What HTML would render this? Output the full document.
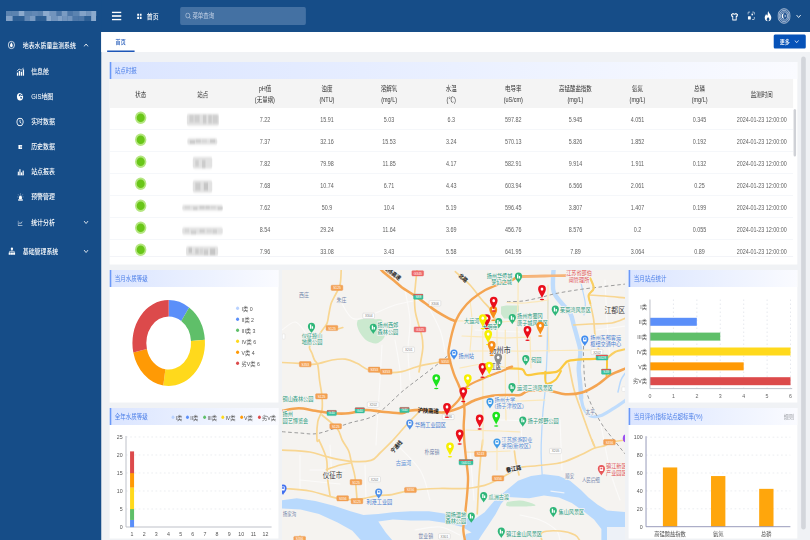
<!DOCTYPE html><html lang="zh-CN"><head><meta charset="utf-8"><title>地表水质量监测系统</title><style>
*{box-sizing:border-box;margin:0;padding:0}
html,body{width:810px;height:540px;overflow:hidden;background:#f0f2f5;}
body{font-family:"Liberation Sans","Noto Sans CJK SC",sans-serif;}
#app{position:absolute;left:0;top:0;width:1920px;height:1080px;transform-origin:0 0;transform:scale(0.421875,0.5);background:#f0f2f5;overflow:hidden;font-size:14px;color:#333}
.abs{position:absolute}
#side{position:absolute;left:0;top:0;width:240px;height:1080px;background:#164d88;color:#fff}
#head{position:absolute;left:240px;top:0;width:1680px;height:64px;background:#164d88;color:#fff}
#tabs{position:absolute;left:240px;top:64px;width:1680px;height:40px;background:#fff;}
.mi{position:absolute;left:0;width:240px;height:50px;line-height:50px;font-size:14px;color:#fff;font-weight:500;white-space:nowrap}
.mi svg{position:absolute}
.card{position:absolute;background:#fff;}
.ct{position:absolute;left:0;top:0;right:0;height:34px;line-height:34px;border-left:4px solid #6a98f8;padding-left:8px;font-size:13px;color:#4c7fe8;background:linear-gradient(90deg,#dbe5ff 0%,#eaf0ff 50%,#fafbff 100%);white-space:nowrap}
.th{position:absolute;top:2px;height:58px;width:147px;text-align:center;font-size:13px;color:#333;line-height:22px;display:flex;align-items:center;justify-content:center;white-space:nowrap}
.td{position:absolute;top:2px;width:147px;text-align:center;font-size:12.8px;color:#626262;height:44px;line-height:44px;white-space:nowrap}
.row{position:absolute;left:0;width:1620px;height:44px;border-bottom:1px solid #ebeef5;}
.dot{position:absolute;left:60px;top:6.5px;width:27px;height:25px;border-radius:50%;background:#69c618;border:4px solid #b5e681}
.blur{position:absolute;background:#d4d4d4;filter:blur(2.5px);border-radius:3px}
</style></head><body><div id="app"><div class="abs" style="left:0;top:0;width:1920px;height:64px;background:#164d88"></div><div id="side"><div class="abs" style="left:14px;top:22px;width:214px;height:20px;filter:blur(1.2px);overflow:hidden"><i class="abs" style="left:0px;top:0px;width:14px;height:10px;background:rgba(205,220,242,0.38)"></i><i class="abs" style="left:14px;top:0px;width:16px;height:10px;background:rgba(205,220,242,0.38)"></i><i class="abs" style="left:30px;top:0px;width:14px;height:10px;background:rgba(205,220,242,0.65)"></i><i class="abs" style="left:44px;top:0px;width:16px;height:10px;background:rgba(205,220,242,0.38)"></i><i class="abs" style="left:60px;top:0px;width:16px;height:10px;background:rgba(205,220,242,0.42)"></i><i class="abs" style="left:76px;top:0px;width:12px;height:10px;background:rgba(205,220,242,0.38)"></i><i class="abs" style="left:88px;top:0px;width:16px;height:10px;background:rgba(205,220,242,0.65)"></i><i class="abs" style="left:104px;top:0px;width:16px;height:10px;background:rgba(205,220,242,0.5)"></i><i class="abs" style="left:120px;top:0px;width:12px;height:10px;background:rgba(205,220,242,0.3)"></i><i class="abs" style="left:132px;top:0px;width:14px;height:10px;background:rgba(205,220,242,0.55)"></i><i class="abs" style="left:146px;top:0px;width:12px;height:10px;background:rgba(205,220,242,0.3)"></i><i class="abs" style="left:158px;top:0px;width:16px;height:10px;background:rgba(205,220,242,0.38)"></i><i class="abs" style="left:174px;top:0px;width:16px;height:10px;background:rgba(205,220,242,0.6)"></i><i class="abs" style="left:190px;top:0px;width:12px;height:10px;background:rgba(205,220,242,0.5)"></i><i class="abs" style="left:202px;top:0px;width:14px;height:10px;background:rgba(205,220,242,0.65)"></i><i class="abs" style="left:0px;top:10px;width:16px;height:10px;background:rgba(205,220,242,0.6)"></i><i class="abs" style="left:16px;top:10px;width:12px;height:10px;background:rgba(205,220,242,0.12)"></i><i class="abs" style="left:28px;top:10px;width:16px;height:10px;background:rgba(205,220,242,0.12)"></i><i class="abs" style="left:44px;top:10px;width:12px;height:10px;background:rgba(205,220,242,0.42)"></i><i class="abs" style="left:56px;top:10px;width:14px;height:10px;background:rgba(205,220,242,0.55)"></i><i class="abs" style="left:70px;top:10px;width:12px;height:10px;background:rgba(205,220,242,0.12)"></i><i class="abs" style="left:82px;top:10px;width:14px;height:10px;background:rgba(205,220,242,0.12)"></i><i class="abs" style="left:96px;top:10px;width:12px;height:10px;background:rgba(205,220,242,0.65)"></i><i class="abs" style="left:108px;top:10px;width:14px;height:10px;background:rgba(205,220,242,0.5)"></i><i class="abs" style="left:122px;top:10px;width:12px;height:10px;background:rgba(205,220,242,0.6)"></i><i class="abs" style="left:134px;top:10px;width:12px;height:10px;background:rgba(205,220,242,0.5)"></i><i class="abs" style="left:146px;top:10px;width:12px;height:10px;background:rgba(205,220,242,0.5)"></i><i class="abs" style="left:158px;top:10px;width:14px;height:10px;background:rgba(205,220,242,0.3)"></i><i class="abs" style="left:172px;top:10px;width:14px;height:10px;background:rgba(205,220,242,0.3)"></i><i class="abs" style="left:186px;top:10px;width:16px;height:10px;background:rgba(205,220,242,0.12)"></i><i class="abs" style="left:202px;top:10px;width:12px;height:10px;background:rgba(205,220,242,0.65)"></i></div><div class="mi" style="top:65px"><svg width="18" height="18" viewBox="0 0 22 22" style="left:18px;top:16px"><circle cx="11" cy="11" r="9" fill="none" stroke="#fff" stroke-width="2"/><path d="M11 4.5 C9 8 7 10 7 12.5 a4 4 0 0 0 8 0 C15 10 13 8 11 4.5z" fill="#fff"/></svg><span class="abs" style="left:54px">地表水质量监测系统</span><svg class="abs" width="12" height="7" viewBox="0 0 12 7" style="left:198px;top:22px"><path d="M1 6 L6 1 L11 6" stroke="#fff" stroke-width="1.8" fill="none"/></svg></div><div class="mi" style="top:117px"><svg width="19" height="17" viewBox="0 0 24 20" style="left:38.5px;top:17.5px"><rect x="1" y="12" width="4" height="8" fill="#fff"/><rect x="7" y="8" width="4" height="12" fill="#fff"/><rect x="13" y="10" width="4" height="10" fill="#fff"/><rect x="19" y="4" width="4" height="16" fill="#fff"/><path d="M1 9 L8 3 L14 6 L22 0" stroke="#fff" stroke-width="2" fill="none"/></svg><span class="abs" style="left:74px">信息舱</span></div><div class="mi" style="top:167px"><svg width="17" height="17" viewBox="0 0 22 22" style="left:39px;top:18px"><circle cx="11" cy="11" r="9.5" fill="#fff"/><path d="M8 4 l4 2 l-1 3 l-4 1z M12 11 l5 1 l-2 5 l-3 -2z" fill="#164d88"/><circle cx="16" cy="5" r="4" fill="#164d88"/><circle cx="16" cy="5" r="2" fill="#fff"/></svg><span class="abs" style="left:74px">GIS地图</span></div><div class="mi" style="top:217px"><svg width="19" height="18" viewBox="0 0 22 22" style="left:38px;top:17.5px"><circle cx="11" cy="11" r="9" fill="none" stroke="#fff" stroke-width="2.6"/><path d="M11 5.5 V11.5 L15 14" stroke="#fff" stroke-width="2.2" fill="none"/></svg><span class="abs" style="left:74px">实时数据</span></div><div class="mi" style="top:267px"><svg width="10" height="10" viewBox="0 0 18 18" style="left:43px;top:21.5px"><rect x="1" y="2" width="16" height="14" rx="1" fill="#fff"/><rect x="10" y="5" width="4" height="3" fill="#164d88"/><rect x="10" y="10" width="4" height="3" fill="#164d88"/></svg><span class="abs" style="left:74px">历史数据</span></div><div class="mi" style="top:317px"><svg width="16" height="14" viewBox="0 0 22 20" style="left:40.5px;top:19.5px"><rect x="1" y="9" width="4" height="10" fill="#fff"/><rect x="6.5" y="2" width="4" height="17" fill="#fff"/><rect x="12" y="11" width="4" height="8" fill="#fff"/><rect x="17.5" y="6" width="4" height="13" fill="#fff"/><rect x="0" y="18" width="22" height="2" fill="#fff"/></svg><span class="abs" style="left:74px">站点报表</span></div><div class="mi" style="top:367px"><svg width="15" height="17" viewBox="0 0 22 22" style="left:40.500px;top:18.5px"><path d="M6 16 V11 a5 5 0 0 1 10 0 V16z" fill="#fff"/><rect x="3" y="17" width="16" height="4" fill="#fff"/><path d="M11 0 V3 M3 3 L5.5 5.5 M19 3 L16.500 5.500 M0 10 H3 M19 10 H22" stroke="#fff" stroke-width="1.8"/></svg><span class="abs" style="left:74px">预警管理</span></div><div class="mi" style="top:419px"><svg width="12" height="11" viewBox="0 0 18 16" style="left:42px;top:22px"><path d="M1 0 V15 H17" stroke="#fff" stroke-width="2" fill="none"/><path d="M4 10 L8 6 L11 9 L16 3" stroke="#fff" stroke-width="2" fill="none"/></svg><span class="abs" style="left:74px">统计分析</span><svg class="abs" width="12" height="7" viewBox="0 0 12 7" style="left:198px;top:22px"><path d="M1 1 L6 6 L11 1" stroke="#fff" stroke-width="1.8" fill="none"/></svg></div><div class="mi" style="top:477px"><svg width="16.500" height="16" viewBox="0 0 24 22" style="left:19.5px;top:17px"><circle cx="12" cy="4.500" r="4" fill="#fff"/><path d="M12 8 V12 M4 16 V12 H20 V16" stroke="#fff" stroke-width="2" fill="none"/><rect x="0" y="15" width="8" height="7" rx="1" fill="#fff"/><rect x="8.5" y="15" width="7" height="7" rx="1" fill="#fff"/><rect x="16" y="15" width="8" height="7" rx="1" fill="#fff"/></svg><span class="abs" style="left:54px">基础管理系统</span><svg class="abs" width="12" height="7" viewBox="0 0 12 7" style="left:198px;top:22px"><path d="M1 1 L6 6 L11 1" stroke="#fff" stroke-width="1.8" fill="none"/></svg></div></div><div id="head"><svg class="abs" style="left:25px;top:23px" width="23" height="18" viewBox="0 0 23 18"><rect y="0" width="23" height="3.2" fill="#fff"/><rect y="7.400" width="23" height="3.2" fill="#fff"/><rect y="14.800" width="23" height="3.2" fill="#fff"/></svg><svg class="abs" style="left:85px;top:27px" width="11" height="11" viewBox="0 0 11 11"><rect width="4.5" height="4.500" fill="#fff"/><rect x="6.5" width="4.500" height="4.5" fill="#fff"/><rect y="6.5" width="4.5" height="4.500" fill="#fff"/><rect x="6.500" y="6.500" width="4.500" height="4.500" fill="#fff"/></svg><span class="abs" style="left:108px;top:0;line-height:64px;font-size:14px;font-weight:500">首页</span><div class="abs" style="left:187px;top:14px;width:298px;height:36px;border-radius:4px;background:#4471a3"></div><svg class="abs" style="left:199px;top:25px" width="14" height="14" viewBox="0 0 14 14"><circle cx="6" cy="6" r="4.800" fill="none" stroke="#c7d5e8" stroke-width="1.4"/><path d="M9.500 9.500 L13 13" stroke="#c7d5e8" stroke-width="1.4"/></svg><span class="abs" style="left:216px;top:14px;line-height:36px;font-size:13px;color:#c3d1e6">菜单查询</span><svg class="abs" style="left:1492px;top:25px" width="18" height="17" viewBox="0 0 22 20"><path d="M7 2 L2 5 L4 9.500 L6 8.500 V18 H16 V8.500 L18 9.500 L20 5 L15 2 C14 4.500 8 4.500 7 2z" fill="none" stroke="#fff" stroke-width="2.6" stroke-linejoin="round"/></svg><svg class="abs" style="left:1532px;top:23px" width="17" height="17" viewBox="0 0 20 20"><rect x="1" y="11" width="8" height="8" rx="1.5" fill="#fff"/><path d="M1 7 V3 a2 2 0 0 1 2 -2 H7 M13 1 H17 a2 2 0 0 1 2 2 V7 M19 13 V17 a2 2 0 0 1 -2 2 H13" stroke="#fff" stroke-width="2" fill="none"/><rect x="11" y="5" width="4" height="4" fill="#fff"/></svg><svg class="abs" style="left:1570px;top:22px" width="21" height="21" viewBox="0 0 20 23"><path d="M10.500 0 C11.500 5 18.500 8 18.500 14.500 a8.500 8 0 0 1 -17 0 C1.500 11 4 9 5 6.500 C6.500 8.500 7.500 10 8.500 10 C10 7 8.500 4 10.500 0z" fill="#fff"/><path d="M10 13 C12.500 15 13.500 16.500 13.500 18.500 a3.500 3.200 0 0 1 -7 0 C6.500 16.500 8.500 15.500 10 13z" fill="#164d88"/></svg><svg class="abs" style="left:1603px;top:15px" width="31" height="34" viewBox="0 0 34 36"><circle cx="17" cy="18" r="16" fill="#2a5a95" stroke="#eef2f8" stroke-width="1.6"/><circle cx="17" cy="18" r="12.500" fill="none" stroke="#dfe7f2" stroke-width="1.5"/><circle cx="17" cy="18" r="9" fill="none" stroke="#e6ecf5" stroke-width="1.5"/><path d="M17 12 A6 6 0 0 0 17 24 A9 9 0 0 1 17 12z" fill="#fff"/><circle cx="20" cy="18" r="1.600" fill="#fff"/></svg><svg class="abs" width="12" height="7" viewBox="0 0 12 7" style="left:1647px;top:29px"><path d="M1 1 L6 6 L11 1" stroke="#fff" stroke-width="1.8" fill="none"/></svg></div><div id="tabs"><span class="abs" style="left:34px;top:0;line-height:38px;font-size:12px;color:#1d56b8;font-weight:500">首页</span><div class="abs" style="left:14px;top:37px;width:65px;height:2.5px;background:#1d56b8"></div><div class="abs" style="left:1594px;top:5px;width:76px;height:28px;border-radius:3px;background:#0652b8;color:#fff;font-size:12px;line-height:28px;padding-left:14px;font-weight:500">更多<svg class="abs" width="10.8" height="6.3" viewBox="0 0 12 7" style="left:49px;top:11px"><path d="M1 1 L6 6 L11 1" stroke="#fff" stroke-width="1.8" fill="none"/></svg></div></div><div class="abs" style="left:1899px;top:113px;width:11px;height:946px;border-radius:6px;background:#d3d6db"></div><div class="card" style="left:260px;top:124px;width:1630px;height:405px"><div class="ct">站点时报</div><div class="abs" style="left:0;top:34px;width:1620px;height:58px;background:#f4f4f4"><div class="th" style="left:0.0px"><div>状态</div></div><div class="th" style="left:147.2px"><div>站点</div></div><div class="th" style="left:294.4px"><div>pH值<br>(无量纲)</div></div><div class="th" style="left:441.6px"><div>浊度<br>(NTU)</div></div><div class="th" style="left:588.8px"><div>溶解氧<br>(mg/L)</div></div><div class="th" style="left:736.0px"><div>水温<br>(℃)</div></div><div class="th" style="left:883.2px"><div>电导率<br>(uS/cm)</div></div><div class="th" style="left:1030.4px"><div>高锰酸盐指数<br>(mg/L)</div></div><div class="th" style="left:1177.6px"><div>氨氮<br>(mg/L)</div></div><div class="th" style="left:1324.8px"><div>总磷<br>(mg/L)</div></div><div class="th" style="left:1472.0px"><div>监测时间</div></div></div><div class="abs" style="left:0;top:92px;width:1620px;height:298px;overflow:hidden;border-bottom:1.5px solid #e6e9f0"><div class="row" style="top:0px"><div class="dot"></div><div class="abs" style="left:183px;top:12px;width:76px;height:23px;filter:blur(1.6px);background:#e2e2e2;border-radius:4px;overflow:hidden"><i class="abs" style="left:6px;top:2px;width:10px;height:15px;background:#cfcfcf"></i><i class="abs" style="left:18px;top:2px;width:12px;height:15px;background:#cfcfcf"></i><i class="abs" style="left:38px;top:2px;width:8px;height:17px;background:#cccccc"></i><i class="abs" style="left:51px;top:2px;width:8px;height:17px;background:#cccccc"></i><i class="abs" style="left:61px;top:2px;width:12px;height:17px;background:#cfcfcf"></i></div><div class="td" style="left:294.4px">7.22</div><div class="td" style="left:441.6px">15.91</div><div class="td" style="left:588.8px">5.03</div><div class="td" style="left:736.0px">6.3</div><div class="td" style="left:883.2px">597.82</div><div class="td" style="left:1030.4px">5.945</div><div class="td" style="left:1177.6px">4.051</div><div class="td" style="left:1324.8px">0.345</div><div class="td" style="left:1472.0px">2024-01-23 12:00:00</div></div><div class="row" style="top:44px"><div class="dot"></div><div class="abs" style="left:184px;top:17px;width:71px;height:12px;filter:blur(1.6px);background:#e2e2e2;border-radius:4px;overflow:hidden"><i class="abs" style="left:6px;top:4px;width:12px;height:6px;background:#c6c6c6"></i><i class="abs" style="left:20px;top:2px;width:12px;height:6px;background:#cccccc"></i><i class="abs" style="left:34px;top:2px;width:12px;height:6px;background:#d6d6d6"></i><i class="abs" style="left:54px;top:2px;width:12px;height:6px;background:#c6c6c6"></i></div><div class="td" style="left:294.4px">7.37</div><div class="td" style="left:441.6px">32.16</div><div class="td" style="left:588.8px">15.53</div><div class="td" style="left:736.0px">3.24</div><div class="td" style="left:883.2px">570.13</div><div class="td" style="left:1030.4px">5.826</div><div class="td" style="left:1177.6px">1.852</div><div class="td" style="left:1324.8px">0.192</div><div class="td" style="left:1472.0px">2024-01-23 12:00:00</div></div><div class="row" style="top:88px"><div class="dot"></div><div class="abs" style="left:197px;top:10px;width:46px;height:23px;filter:blur(1.6px);background:#e2e2e2;border-radius:4px;overflow:hidden"><i class="abs" style="left:6px;top:6px;width:8px;height:13px;background:#cfcfcf"></i><i class="abs" style="left:22px;top:6px;width:8px;height:17px;background:#cccccc"></i></div><div class="td" style="left:294.4px">7.82</div><div class="td" style="left:441.6px">79.98</div><div class="td" style="left:588.8px">11.85</div><div class="td" style="left:736.0px">4.17</div><div class="td" style="left:883.2px">582.91</div><div class="td" style="left:1030.4px">9.914</div><div class="td" style="left:1177.6px">1.911</div><div class="td" style="left:1324.8px">0.132</div><div class="td" style="left:1472.0px">2024-01-23 12:00:00</div></div><div class="row" style="top:132px"><div class="dot"></div><div class="abs" style="left:197px;top:13px;width:46px;height:24px;filter:blur(1.6px);background:#e2e2e2;border-radius:4px;overflow:hidden"><i class="abs" style="left:6px;top:4px;width:12px;height:16px;background:#cccccc"></i><i class="abs" style="left:26px;top:4px;width:10px;height:16px;background:#c6c6c6"></i></div><div class="td" style="left:294.4px">7.68</div><div class="td" style="left:441.6px">10.74</div><div class="td" style="left:588.8px">6.71</div><div class="td" style="left:736.0px">4.43</div><div class="td" style="left:883.2px">603.94</div><div class="td" style="left:1030.4px">6.566</div><div class="td" style="left:1177.6px">2.061</div><div class="td" style="left:1324.8px">0.25</div><div class="td" style="left:1472.0px">2024-01-23 12:00:00</div></div><div class="row" style="top:176px"><div class="dot"></div><div class="abs" style="left:172px;top:18px;width:96px;height:11px;filter:blur(1.6px);background:#e2e2e2;border-radius:4px;overflow:hidden"><i class="abs" style="left:6px;top:2px;width:12px;height:6px;background:#d6d6d6"></i><i class="abs" style="left:26px;top:4px;width:10px;height:6px;background:#cccccc"></i><i class="abs" style="left:41px;top:2px;width:12px;height:6px;background:#cccccc"></i><i class="abs" style="left:55px;top:2px;width:10px;height:6px;background:#cccccc"></i><i class="abs" style="left:67px;top:2px;width:12px;height:6px;background:#d6d6d6"></i><i class="abs" style="left:84px;top:4px;width:12px;height:6px;background:#cccccc"></i></div><div class="td" style="left:294.4px">7.62</div><div class="td" style="left:441.6px">50.9</div><div class="td" style="left:588.8px">10.4</div><div class="td" style="left:736.0px">5.19</div><div class="td" style="left:883.2px">596.45</div><div class="td" style="left:1030.4px">3.807</div><div class="td" style="left:1177.6px">1.407</div><div class="td" style="left:1324.8px">0.199</div><div class="td" style="left:1472.0px">2024-01-23 12:00:00</div></div><div class="row" style="top:220px"><div class="dot"></div><div class="abs" style="left:172px;top:19px;width:96px;height:14px;filter:blur(1.6px);background:#e2e2e2;border-radius:4px;overflow:hidden"><i class="abs" style="left:6px;top:2px;width:10px;height:8px;background:#d6d6d6"></i><i class="abs" style="left:21px;top:6px;width:12px;height:8px;background:#cfcfcf"></i><i class="abs" style="left:41px;top:4px;width:12px;height:6px;background:#cccccc"></i><i class="abs" style="left:58px;top:4px;width:12px;height:6px;background:#d6d6d6"></i><i class="abs" style="left:72px;top:4px;width:10px;height:8px;background:#cfcfcf"></i></div><div class="td" style="left:294.4px">8.54</div><div class="td" style="left:441.6px">29.24</div><div class="td" style="left:588.8px">11.64</div><div class="td" style="left:736.0px">3.69</div><div class="td" style="left:883.2px">456.76</div><div class="td" style="left:1030.4px">8.576</div><div class="td" style="left:1177.6px">0.2</div><div class="td" style="left:1324.8px">0.055</div><div class="td" style="left:1472.0px">2024-01-23 12:00:00</div></div><div class="row" style="top:264px"><div class="dot"></div><div class="abs" style="left:181px;top:13px;width:76px;height:19px;filter:blur(1.6px);background:#e2e2e2;border-radius:4px;overflow:hidden"><i class="abs" style="left:6px;top:2px;width:8px;height:11px;background:#c6c6c6"></i><i class="abs" style="left:22px;top:4px;width:8px;height:11px;background:#cccccc"></i><i class="abs" style="left:32px;top:4px;width:8px;height:11px;background:#d6d6d6"></i><i class="abs" style="left:42px;top:6px;width:10px;height:11px;background:#cccccc"></i><i class="abs" style="left:57px;top:4px;width:12px;height:13px;background:#c6c6c6"></i></div><div class="td" style="left:294.4px">7.96</div><div class="td" style="left:441.6px">33.08</div><div class="td" style="left:588.8px">3.43</div><div class="td" style="left:736.0px">5.58</div><div class="td" style="left:883.2px">641.95</div><div class="td" style="left:1030.4px">7.89</div><div class="td" style="left:1177.6px">3.064</div><div class="td" style="left:1324.8px">0.89</div><div class="td" style="left:1472.0px">2024-01-23 12:00:00</div></div></div><div class="abs" style="left:1621px;top:94px;width:6px;height:95px;border-radius:3px;background:#cfd1d6"></div></div><div class="card" style="left:260px;top:540px;width:400px;height:265px"><div class="ct">当月水质等级</div><svg class="abs" style="left:0;top:0" width="400" height="265" viewBox="0 0 400 265" font-family="Liberation Sans,Noto Sans CJK SC,sans-serif"><path d="M139.9 60.0 A86 86 0 0 1 188.3 74.9 L169.7 102.2 A53 53 0 0 0 139.9 93.0Z" fill="#5b8ff9"/><path d="M188.3 74.9 A86 86 0 0 1 225.6 139.6 L192.7 142.0 A53 53 0 0 0 169.7 102.2Z" fill="#5fbf69"/><path d="M225.6 139.6 A86 86 0 0 1 127.1 231.0 L132.0 198.4 A53 53 0 0 0 192.7 142.0Z" fill="#ffd91c"/><path d="M127.1 231.0 A86 86 0 0 1 56.0 165.1 L88.2 157.8 A53 53 0 0 0 132.0 198.4Z" fill="#ff9a05"/><path d="M56.0 165.1 A86 86 0 0 1 139.9 60.0 L139.9 93.0 A53 53 0 0 0 88.2 157.8Z" fill="#dc4a4b"/><circle cx="303.2" cy="76.6" r="3.6" fill="#b9d2ff"/><text x="312.4" y="81.1" font-size="12.5" fill="#555">I类 0</text><circle cx="303.2" cy="98.6" r="3.6" fill="#5b8ff9"/><text x="312.4" y="103.1" font-size="12.5" fill="#555">II类 2</text><circle cx="303.2" cy="120.6" r="3.6" fill="#5fbf69"/><text x="312.4" y="125.1" font-size="12.5" fill="#555">III类 3</text><circle cx="303.2" cy="142.6" r="3.6" fill="#ffd91c"/><text x="312.4" y="147.1" font-size="12.5" fill="#555">IV类 6</text><circle cx="303.2" cy="164.6" r="3.6" fill="#ff9a05"/><text x="312.4" y="169.1" font-size="12.5" fill="#555">V类 4</text><circle cx="303.2" cy="186.6" r="3.6" fill="#dc4a4b"/><text x="312.4" y="191.1" font-size="12.5" fill="#555">劣V类 6</text></svg></div><div class="card" style="left:260px;top:816px;width:400px;height:261px"><div class="ct">全年水质等级</div><svg class="abs" style="left:0;top:0" width="400" height="261" viewBox="0 0 400 261" font-family="Liberation Sans,Noto Sans CJK SC,sans-serif"><text x="30.7" y="242.5" font-size="12.5" fill="#555" text-anchor="end">0</text><path d="M38.7 202.0 H383.8" stroke="#e1e4ea" stroke-width="1.4" stroke-dasharray="4 6"/><text x="30.7" y="206.5" font-size="12.5" fill="#555" text-anchor="end">5</text><path d="M38.7 166.0 H383.8" stroke="#e1e4ea" stroke-width="1.4" stroke-dasharray="4 6"/><text x="30.7" y="170.5" font-size="12.5" fill="#555" text-anchor="end">10</text><path d="M38.7 130.0 H383.8" stroke="#e1e4ea" stroke-width="1.4" stroke-dasharray="4 6"/><text x="30.7" y="134.5" font-size="12.5" fill="#555" text-anchor="end">15</text><path d="M38.7 94.0 H383.8" stroke="#e1e4ea" stroke-width="1.4" stroke-dasharray="4 6"/><text x="30.7" y="98.5" font-size="12.5" fill="#555" text-anchor="end">20</text><path d="M38.7 58.0 H383.8" stroke="#e1e4ea" stroke-width="1.4" stroke-dasharray="4 6"/><text x="30.7" y="62.5" font-size="12.5" fill="#555" text-anchor="end">25</text><path d="M38.7 56.0 V238.0 H383.8" stroke="#b9bcc4" stroke-width="2" fill="none"/><text x="53.0" y="257.0" font-size="12.5" fill="#555" text-anchor="middle">1</text><text x="81.8" y="257.0" font-size="12.5" fill="#555" text-anchor="middle">2</text><text x="110.6" y="257.0" font-size="12.5" fill="#555" text-anchor="middle">3</text><text x="139.3" y="257.0" font-size="12.5" fill="#555" text-anchor="middle">4</text><text x="168.1" y="257.0" font-size="12.5" fill="#555" text-anchor="middle">5</text><text x="196.8" y="257.0" font-size="12.5" fill="#555" text-anchor="middle">6</text><text x="225.6" y="257.0" font-size="12.5" fill="#555" text-anchor="middle">7</text><text x="254.4" y="257.0" font-size="12.5" fill="#555" text-anchor="middle">8</text><text x="283.1" y="257.0" font-size="12.5" fill="#555" text-anchor="middle">9</text><text x="311.9" y="257.0" font-size="12.5" fill="#555" text-anchor="middle">10</text><text x="340.7" y="257.0" font-size="12.5" fill="#555" text-anchor="middle">11</text><text x="369.4" y="257.0" font-size="12.5" fill="#555" text-anchor="middle">12</text><rect x="48.3" y="223.6" width="9.5" height="14.7" fill="#5b8ff9"/><rect x="48.3" y="202.0" width="9.5" height="21.9" fill="#5fbf69"/><rect x="48.3" y="158.8" width="9.5" height="43.5" fill="#ffd91c"/><rect x="48.3" y="130.0" width="9.5" height="29.1" fill="#ff9a05"/><rect x="48.3" y="86.8" width="9.5" height="43.5" fill="#dc4a4b"/><circle cx="150.1" cy="18.6" r="3.4" fill="#b9d2ff"/><text x="156.2" y="23.1" font-size="12.500" fill="#555">I类</text><circle cx="184.4" cy="18.6" r="3.4" fill="#5b8ff9"/><text x="190.8" y="23.1" font-size="12.500" fill="#555">II类</text><circle cx="225.0" cy="18.6" r="3.4" fill="#5fbf69"/><text x="231.6" y="23.1" font-size="12.500" fill="#555">III类</text><circle cx="268.1" cy="18.6" r="3.4" fill="#ffd91c"/><text x="274.3" y="23.1" font-size="12.500" fill="#555">IV类</text><circle cx="312.9" cy="18.6" r="3.4" fill="#ff9a05"/><text x="318.4" y="23.1" font-size="12.500" fill="#555">V类</text><circle cx="354.9" cy="18.6" r="3.4" fill="#dc4a4b"/><text x="361.0" y="23.1" font-size="12.500" fill="#555">劣V类</text></svg></div><div class="card" style="left:1490px;top:540px;width:400px;height:265px"><div class="ct">当月站点统计</div><svg class="abs" style="left:0;top:0" width="400" height="265" viewBox="0 0 400 265" font-family="Liberation Sans,Noto Sans CJK SC,sans-serif"><text x="50.7" y="256.6" font-size="12.500" fill="#666" text-anchor="middle">0</text><path d="M106.3 59.0 V237.2" stroke="#e1e4ea" stroke-width="1.8" stroke-dasharray="3 5"/><text x="106.3" y="256.6" font-size="12.500" fill="#666" text-anchor="middle">1</text><path d="M161.8 59.0 V237.2" stroke="#e1e4ea" stroke-width="1.8" stroke-dasharray="3 5"/><text x="161.8" y="256.6" font-size="12.500" fill="#666" text-anchor="middle">2</text><path d="M217.3 59.0 V237.2" stroke="#e1e4ea" stroke-width="1.8" stroke-dasharray="3 5"/><text x="217.3" y="256.6" font-size="12.500" fill="#666" text-anchor="middle">3</text><path d="M272.8 59.0 V237.2" stroke="#e1e4ea" stroke-width="1.8" stroke-dasharray="3 5"/><text x="272.8" y="256.6" font-size="12.500" fill="#666" text-anchor="middle">4</text><path d="M328.3 59.0 V237.2" stroke="#e1e4ea" stroke-width="1.8" stroke-dasharray="3 5"/><text x="328.3" y="256.6" font-size="12.500" fill="#666" text-anchor="middle">5</text><path d="M383.8 59.0 V237.2" stroke="#e1e4ea" stroke-width="1.8" stroke-dasharray="3 5"/><text x="383.8" y="256.6" font-size="12.500" fill="#666" text-anchor="middle">6</text><text x="43.7" y="78.4" font-size="12.5" fill="#555" text-anchor="end">I类</text><text x="43.7" y="108.1" font-size="12.5" fill="#555" text-anchor="end">II类</text><rect x="50.7" y="95.6" width="111.0" height="16" fill="#5b8ff9"/><text x="43.7" y="137.8" font-size="12.5" fill="#555" text-anchor="end">III类</text><rect x="50.7" y="125.2" width="166.5" height="16" fill="#5fbf69"/><text x="43.7" y="167.5" font-size="12.5" fill="#555" text-anchor="end">IV类</text><rect x="50.7" y="155.0" width="333.1" height="16" fill="#ffd91c"/><text x="43.7" y="197.2" font-size="12.5" fill="#555" text-anchor="end">V类</text><rect x="50.7" y="184.7" width="222.1" height="16" fill="#ff9a05"/><text x="43.7" y="226.9" font-size="12.5" fill="#555" text-anchor="end">劣V类</text><rect x="50.7" y="214.4" width="333.1" height="16" fill="#dc4a4b"/><path d="M50.7 59.0 V237.2 H387.8" stroke="#b9bcc4" stroke-width="2" fill="none"/></svg></div><div class="card" style="left:1490px;top:816px;width:400px;height:261px"><div class="ct">当月评价指标站点超标率(%)<span class="abs" style="right:8px;top:0;color:#9a9da3;font-size:12px">规则</span></div><svg class="abs" style="left:0;top:0" width="400" height="261" viewBox="0 0 400 261" font-family="Liberation Sans,Noto Sans CJK SC,sans-serif"><text x="33.3" y="241.9" font-size="12.500" fill="#555" text-anchor="end">0</text><path d="M41.3 201.6 H383.5" stroke="#e1e4ea" stroke-width="1.4" stroke-dasharray="4 6"/><text x="33.3" y="206.1" font-size="12.500" fill="#555" text-anchor="end">20</text><path d="M41.3 165.8 H383.5" stroke="#e1e4ea" stroke-width="1.4" stroke-dasharray="4 6"/><text x="33.3" y="170.3" font-size="12.500" fill="#555" text-anchor="end">40</text><path d="M41.3 130.0 H383.5" stroke="#e1e4ea" stroke-width="1.4" stroke-dasharray="4 6"/><text x="33.3" y="134.5" font-size="12.500" fill="#555" text-anchor="end">60</text><path d="M41.3 94.2 H383.5" stroke="#e1e4ea" stroke-width="1.4" stroke-dasharray="4 6"/><text x="33.3" y="98.7" font-size="12.500" fill="#555" text-anchor="end">80</text><path d="M41.3 58.4 H383.5" stroke="#e1e4ea" stroke-width="1.4" stroke-dasharray="4 6"/><text x="33.3" y="62.9" font-size="12.500" fill="#555" text-anchor="end">100</text><rect x="81.3" y="118.9" width="34" height="118.5" fill="#ffa60c"/><text x="98.3" y="257.0" font-size="12.500" fill="#555" text-anchor="middle">高锰酸盐指数</text><rect x="195.4" y="136.1" width="34" height="101.3" fill="#ffa60c"/><text x="212.4" y="257.0" font-size="12.500" fill="#555" text-anchor="middle">氨氮</text><rect x="309.5" y="161.7" width="34" height="75.7" fill="#ffa60c"/><text x="326.5" y="257.0" font-size="12.500" fill="#555" text-anchor="middle">总磷</text><path d="M41.3 56.4 V237.4 H383.5" stroke="#8f93b5" stroke-width="2" fill="none"/></svg></div></div><svg style="position:absolute;left:282px;top:270px" width="343.3" height="270" viewBox="282 270 343.3 270" font-family="Liberation Sans,Noto Sans CJK SC,sans-serif"><rect x="282" y="270" width="343.3" height="270" fill="#f5f3f0"/><path d="M357.8 320.0 C359.2 319.8 363.1 318.9 366.0 318.8 C368.9 318.7 372.6 319.0 375.3 319.2 C378.0 319.4 380.7 318.5 382.0 320.0 C383.3 321.5 382.6 325.2 383.0 328.0 C383.4 330.8 385.5 334.1 384.5 336.7 C383.5 339.2 379.9 342.6 377.0 343.3 C374.1 344.0 369.8 342.5 367.0 340.8 C364.2 339.1 362.0 335.9 360.3 333.3 C358.6 330.7 357.4 327.2 357.0 325.0 C356.6 322.8 357.7 320.8 357.8 320.0Z" fill="#cbe9cf"/><path d="M501.0 306.5 L506.0 305.5 L519.0 305.5 L519.0 318.5 L504.0 318.5 L501.0 314.0Z" fill="#cbe8cf"/><path d="M507.0 502.0 C509.2 501.8 516.0 500.3 520.0 500.5 C524.0 500.7 528.5 502.1 531.0 503.0 C533.5 503.9 536.8 505.2 535.0 505.8 C533.2 506.4 524.7 506.5 520.0 506.5 C515.3 506.5 509.2 506.8 507.0 506.0 C504.8 505.2 507.0 502.7 507.0 502.0Z" fill="#cbe9cf"/><path d="M610.0 524.0 C611.0 524.5 614.2 525.8 616.0 527.0 C617.8 528.2 620.7 530.0 621.0 531.0 C621.3 532.0 619.5 533.3 618.0 533.0 C616.5 532.7 613.3 530.5 612.0 529.0 C610.7 527.5 610.3 524.8 610.0 524.0Z" fill="#cbe9cf"/><path d="M282.0 500.2 L296.8 498.3 L315.3 501.1 L333.9 505.7 L350.5 511.3 L363.5 515.0 L378.3 514.0 L393.0 512.2 L410.5 511.3 L429.0 511.3 L447.6 514.0 L462.4 517.8 L475.3 518.7 L484.6 512.2 L495.7 499.3 L506.8 490.0 L518.0 480.7 L531.0 476.0 L544.0 474.3 L558.9 476.0 L570.0 480.7 L581.0 490.0 L588.5 497.4 L597.7 504.8 L607.0 510.4 L626.0 512.2 L626.0 527.0 L607.0 527.0 L607.0 541.0 L601.4 541.0 L601.4 528.9 L594.0 519.6 L584.8 512.2 L571.8 503.0 L558.9 497.4 L544.0 495.6 L529.2 498.3 L516.3 497.4 L507.0 497.0 L501.0 504.0 L495.7 514.0 L488.3 525.2 L480.9 536.3 L478.0 541.0 L463.0 541.0 L466.0 534.0 L471.6 532.6 L462.4 527.0 L447.6 523.3 L429.0 520.6 L410.5 520.6 L393.0 519.6 L378.3 521.5 L385.7 532.6 L393.0 541.0 L361.6 541.0 L352.4 530.7 L337.6 522.4 L319.0 514.0 L300.5 509.4 L282.0 508.5Z" fill="#b8d9fd"/><path d="M550.5 490.6 L564.4 492.2 L564.4 493.4 L550.5 491.8Z" fill="#eef3fa"/><path d="M607.0 527.0 L626.0 527.0 L626.0 541.0 L607.0 541.0Z" fill="#edf1f7"/><path d="M553.7 268.0 C553.6 270.0 553.0 276.1 553.0 280.0 C553.0 283.9 552.5 288.1 553.7 291.7 C554.9 295.3 557.5 298.1 560.3 301.7 C563.1 305.3 568.1 309.4 570.3 313.3 C572.5 317.2 572.6 321.1 573.7 325.0 C574.8 328.9 576.0 332.8 577.0 336.7 C578.0 340.6 579.5 345.2 580.0 348.3 C580.5 351.4 580.5 351.7 580.3 355.0 C580.1 358.3 578.7 363.3 578.7 368.3 C578.7 373.3 579.9 380.0 580.3 385.0 C580.7 390.0 581.1 396.1 581.2 398.3" fill="none" stroke="#bfdcfc" stroke-width="4.4" stroke-linecap="round" stroke-linejoin="round"/><path d="M581.2 398.3 C581.6 400.0 582.2 405.4 583.7 408.3 C585.2 411.2 587.5 414.6 590.3 415.8 C593.1 417.1 596.4 417.1 600.3 415.8 C604.2 414.6 609.4 410.9 613.7 408.3 C618.0 405.7 624.0 401.4 626.0 400.0" fill="none" stroke="#bfdcfc" stroke-width="3.2" stroke-linecap="round" stroke-linejoin="round"/><path d="M580.3 280.0 C580.8 282.0 582.2 288.1 583.0 292.0 C583.8 295.9 585.1 299.5 585.3 303.3 C585.5 307.1 584.2 313.1 584.0 315.0" fill="none" stroke="#b8d9fd" stroke-width="1.2" stroke-linecap="round" stroke-linejoin="round"/><path d="M548.0 300.0 C547.9 305.0 547.7 320.8 547.5 330.0 C547.3 339.2 547.4 345.3 547.0 355.0 C546.6 364.7 546.0 378.6 545.3 388.3 C544.6 398.0 543.5 403.9 542.8 413.3 C542.1 422.8 541.5 437.2 541.2 445.0 C541.0 452.8 541.1 455.0 541.3 460.0 C541.5 465.0 542.1 472.7 542.2 475.2" fill="none" stroke="#b8d9fd" stroke-width="1.3" stroke-linecap="round" stroke-linejoin="round"/><path d="M626.0 372.0 C625.2 373.3 622.3 376.7 621.0 380.0 C619.7 383.3 618.5 390.0 618.0 392.0" fill="none" stroke="#b8d9fd" stroke-width="1.5" stroke-linecap="round" stroke-linejoin="round"/><path d="M282.0 330.0 C284.2 328.7 291.2 321.7 295.0 322.0 C298.8 322.3 302.2 328.2 305.0 332.0 C307.8 335.8 310.8 342.8 312.0 345.0" fill="none" stroke="#fbfaf9" stroke-width="1.1" stroke-linecap="round" stroke-linejoin="round"/><path d="M340.0 300.0 C342.0 303.0 347.3 315.3 352.0 318.0 C356.7 320.7 360.8 318.2 368.0 316.0 C375.2 313.8 386.3 307.7 395.0 305.0 C403.7 302.3 415.8 300.8 420.0 300.0" fill="none" stroke="#fbfaf9" stroke-width="1.1" stroke-linecap="round" stroke-linejoin="round"/><path d="M382.0 345.0 C381.7 350.8 380.7 369.2 380.0 380.0 C379.3 390.8 378.7 399.2 378.0 410.0 C377.3 420.8 376.3 439.2 376.0 445.0" fill="none" stroke="#fbfaf9" stroke-width="1.1" stroke-linecap="round" stroke-linejoin="round"/><path d="M395.0 340.0 C395.8 345.0 399.0 360.8 400.0 370.0 C401.0 379.2 400.8 390.8 401.0 395.0" fill="none" stroke="#fbfaf9" stroke-width="1.1" stroke-linecap="round" stroke-linejoin="round"/><path d="M405.0 290.0 C405.8 295.0 409.5 310.0 410.0 320.0 C410.5 330.0 408.0 340.0 408.0 350.0 C408.0 360.0 409.7 375.0 410.0 380.0" fill="none" stroke="#fbfaf9" stroke-width="1.1" stroke-linecap="round" stroke-linejoin="round"/><path d="M300.0 455.0 L300.0 490.0" fill="none" stroke="#fbfaf9" stroke-width="1.1" stroke-linecap="round" stroke-linejoin="round"/><path d="M310.0 470.0 L345.0 470.0" fill="none" stroke="#fbfaf9" stroke-width="1.1" stroke-linecap="round" stroke-linejoin="round"/><path d="M330.0 445.0 L332.0 480.0" fill="none" stroke="#fbfaf9" stroke-width="1.1" stroke-linecap="round" stroke-linejoin="round"/><path d="M365.0 465.0 L366.0 500.0" fill="none" stroke="#fbfaf9" stroke-width="1.1" stroke-linecap="round" stroke-linejoin="round"/><path d="M300.0 480.0 L340.0 484.0" fill="none" stroke="#fbfaf9" stroke-width="1.1" stroke-linecap="round" stroke-linejoin="round"/><path d="M425.0 300.0 C427.5 305.0 436.7 321.3 440.0 330.0 C443.3 338.7 444.2 348.3 445.0 352.0" fill="none" stroke="#fbfaf9" stroke-width="1.1" stroke-linecap="round" stroke-linejoin="round"/><path d="M392.0 440.0 C396.7 445.0 413.7 460.0 420.0 470.0 C426.3 480.0 428.3 495.0 430.0 500.0" fill="none" stroke="#fbfaf9" stroke-width="1.1" stroke-linecap="round" stroke-linejoin="round"/><path d="M470.0 450.0 L474.0 500.0" fill="none" stroke="#fbfaf9" stroke-width="1.1" stroke-linecap="round" stroke-linejoin="round"/><path d="M475.0 330.0 L520.0 332.0" fill="none" stroke="#fbfaf9" stroke-width="1.1" stroke-linecap="round" stroke-linejoin="round"/><path d="M500.0 420.0 L540.0 421.0" fill="none" stroke="#fbfaf9" stroke-width="1.1" stroke-linecap="round" stroke-linejoin="round"/><path d="M520.0 400.0 L522.0 445.0" fill="none" stroke="#fbfaf9" stroke-width="1.1" stroke-linecap="round" stroke-linejoin="round"/><path d="M560.0 420.0 L562.0 470.0" fill="none" stroke="#fbfaf9" stroke-width="1.1" stroke-linecap="round" stroke-linejoin="round"/><path d="M600.0 420.0 C601.7 428.3 606.7 456.7 610.0 470.0 C613.3 483.3 618.3 495.0 620.0 500.0" fill="none" stroke="#fbfaf9" stroke-width="1.1" stroke-linecap="round" stroke-linejoin="round"/><path d="M596.0 330.0 L626.0 326.0" fill="none" stroke="#fbfaf9" stroke-width="1.1" stroke-linecap="round" stroke-linejoin="round"/><path d="M605.0 280.0 C605.3 286.7 606.2 306.7 607.0 320.0 C607.8 333.3 609.5 353.3 610.0 360.0" fill="none" stroke="#fbfaf9" stroke-width="1.1" stroke-linecap="round" stroke-linejoin="round"/><path d="M415.0 530.0 C419.2 529.5 432.5 526.2 440.0 527.0 C447.5 527.8 456.7 533.7 460.0 535.0" fill="none" stroke="#fbfaf9" stroke-width="1.1" stroke-linecap="round" stroke-linejoin="round"/><path d="M520.0 515.0 C523.3 515.8 534.0 517.5 540.0 520.0 C546.0 522.5 552.7 526.7 556.0 530.0 C559.3 533.3 559.3 538.3 560.0 540.0" fill="none" stroke="#fbfaf9" stroke-width="1.1" stroke-linecap="round" stroke-linejoin="round"/><path d="M282.0 431.7 C285.0 431.9 293.9 432.7 300.0 433.0 C306.1 433.3 310.6 434.9 318.7 433.3 C326.8 431.7 339.3 426.4 348.7 423.3 C358.1 420.2 366.4 420.3 375.3 415.0 C384.2 409.7 395.1 397.5 402.0 391.7 C408.9 385.9 410.9 384.7 417.0 380.0 C423.1 375.3 432.9 368.0 438.7 363.3 C444.5 358.6 449.8 353.9 452.0 352.0" fill="none" stroke="#9c9c9c" stroke-width="1.0" stroke-linecap="butt" stroke-linejoin="round" stroke-dasharray="3.6 2.6"/><path d="M507.0 301.7 C509.7 301.6 517.5 301.7 523.0 301.0 C528.5 300.3 534.6 298.8 540.3 297.5 C546.0 296.2 550.0 294.7 557.0 293.3 C564.0 291.9 574.8 290.2 582.0 289.2 C589.2 288.1 592.7 287.9 600.0 287.0 C607.3 286.1 621.7 284.5 626.0 284.0" fill="none" stroke="#9c9c9c" stroke-width="1.0" stroke-linecap="butt" stroke-linejoin="round" stroke-dasharray="3.6 2.6"/><path d="M583.7 340.0 C583.7 343.9 583.2 354.4 583.7 363.3 C584.2 372.2 584.2 383.6 587.0 393.3 C589.8 403.0 595.6 413.6 600.3 421.7 C605.0 429.8 611.0 436.1 615.3 441.7 C619.6 447.2 624.2 452.8 626.0 455.0" fill="none" stroke="#9c9c9c" stroke-width="1.0" stroke-linecap="butt" stroke-linejoin="round" stroke-dasharray="3.6 2.6"/><path d="M341.2 270.0 C341.1 271.7 341.0 277.2 340.7 280.0 C340.4 282.8 340.4 284.2 339.5 286.7 C338.6 289.2 336.7 292.2 335.3 295.0 C333.9 297.8 332.3 300.0 331.2 303.3 C330.1 306.6 329.4 311.7 328.7 315.0 C328.0 318.3 328.2 320.5 327.0 323.3 C325.8 326.1 323.1 328.9 321.2 331.7 C319.2 334.5 317.2 337.5 315.3 340.0 C313.4 342.5 310.1 344.5 309.5 346.7 C308.9 348.9 311.2 351.1 312.0 353.3 C312.8 355.5 313.5 358.1 314.5 360.0 C315.5 361.9 317.0 361.7 317.8 365.0 C318.6 368.3 318.8 374.7 319.5 380.0 C320.2 385.3 321.6 391.7 322.0 396.7 C322.4 401.7 322.7 405.8 322.0 410.0 C321.3 414.2 318.6 416.7 317.8 421.7 C317.0 426.7 316.8 436.9 317.0 440.0 C317.2 443.1 318.7 440.0 319.0 440.0" fill="none" stroke="#f8d692" stroke-width="1.7" stroke-linecap="round" stroke-linejoin="round"/><path d="M319.0 440.0 C320.2 443.1 325.0 452.3 326.4 458.5 C327.8 464.7 326.8 470.8 327.4 477.0 C328.0 483.2 329.6 492.4 330.0 495.5" fill="none" stroke="#f8d692" stroke-width="1.7" stroke-linecap="round" stroke-linejoin="round"/><path d="M338.7 328.7 L342.8 327.5" fill="none" stroke="#f8d692" stroke-width="1.7" stroke-linecap="round" stroke-linejoin="round"/><path d="M282.0 362.5 C284.8 362.6 293.1 363.0 298.7 363.3 C304.2 363.6 309.8 364.8 315.3 364.2 C320.9 363.6 327.0 360.8 332.0 360.0 C337.0 359.2 341.1 358.6 345.3 359.2 C349.5 359.8 353.1 361.5 357.0 363.3 C360.9 365.1 364.0 368.5 368.7 370.0 C373.4 371.5 379.8 372.2 385.3 372.5 C390.9 372.8 396.7 372.7 402.0 371.7 C407.3 370.7 410.6 368.4 417.0 366.7 C423.4 365.0 435.0 363.1 440.3 361.7 C445.6 360.2 447.6 358.6 449.0 358.0" fill="none" stroke="#f8d692" stroke-width="1.7" stroke-linecap="round" stroke-linejoin="round"/><path d="M322.0 415.0 C324.5 417.2 333.6 424.1 337.0 428.3 C340.4 432.5 340.2 436.2 342.2 440.0 C344.1 443.8 347.2 447.3 348.7 451.0 C350.2 454.7 350.3 457.9 351.4 462.2 C352.4 466.5 354.1 470.8 355.0 477.0 C355.9 483.2 356.7 495.6 357.0 499.3" fill="none" stroke="#f8d692" stroke-width="1.7" stroke-linecap="round" stroke-linejoin="round"/><path d="M282.0 450.2 C286.6 450.5 302.4 450.9 309.8 452.0 C317.2 453.1 319.6 455.1 326.4 456.7 C333.2 458.2 343.1 460.7 350.5 461.3 C357.9 461.9 366.1 461.8 371.0 460.4 C375.9 459.0 376.6 456.1 380.0 453.0 C383.4 449.9 387.6 445.7 391.3 441.9 C395.0 438.1 398.9 433.5 402.0 430.0 C405.1 426.5 407.3 423.8 410.0 421.0 C412.7 418.2 416.7 414.3 418.0 413.0" fill="none" stroke="#f8d692" stroke-width="1.7" stroke-linecap="round" stroke-linejoin="round"/><path d="M326.4 469.6 C328.7 468.8 336.0 466.1 340.0 465.0 C344.0 463.9 348.8 463.3 350.5 463.0" fill="none" stroke="#f8d692" stroke-width="1.7" stroke-linecap="round" stroke-linejoin="round"/><path d="M285.7 488.5 C289.7 488.9 301.1 489.4 309.8 491.0 C318.5 492.6 329.9 496.9 337.6 498.3 C345.3 499.7 349.2 500.1 356.0 499.6 C362.8 499.2 372.3 496.4 378.3 495.6 C384.3 494.8 386.6 495.5 392.0 494.6 C397.4 493.7 402.8 491.4 410.5 490.4 C418.2 489.4 429.1 488.8 438.3 488.5 C447.6 488.2 458.3 489.0 466.0 488.5 C473.7 488.0 479.3 486.8 484.6 485.4 C489.9 483.9 493.0 482.1 497.6 479.8 C502.2 477.5 509.6 472.9 512.0 471.5" fill="none" stroke="#f8d692" stroke-width="1.7" stroke-linecap="round" stroke-linejoin="round"/><path d="M417.0 270.0 C416.7 272.8 415.7 282.2 415.3 286.7 C414.9 291.1 414.5 292.5 414.5 296.7 C414.5 300.9 414.6 307.0 415.3 311.7 C416.0 316.4 417.6 320.8 418.7 325.0 C419.8 329.2 421.3 332.8 422.0 336.7 C422.7 340.6 423.0 344.4 422.8 348.3 C422.6 352.2 421.6 356.1 421.0 360.0 C420.4 363.9 419.3 370.0 419.0 372.0" fill="none" stroke="#f8d692" stroke-width="1.7" stroke-linecap="round" stroke-linejoin="round"/><path d="M455.3 271.7 C457.8 273.9 465.6 280.3 470.0 285.0 C474.4 289.7 478.3 295.6 482.0 300.0 C485.7 304.4 489.5 307.5 492.0 311.7 C494.5 315.9 496.2 322.8 497.0 325.0" fill="none" stroke="#f8d692" stroke-width="1.7" stroke-linecap="round" stroke-linejoin="round"/><path d="M482.7 440.0 C482.4 442.5 481.5 448.6 480.9 454.8 C480.3 461.0 479.5 470.2 479.0 477.0 C478.5 483.8 478.4 489.3 478.1 495.5 C477.8 501.7 477.4 510.9 477.2 514.0" fill="none" stroke="#f8d692" stroke-width="1.7" stroke-linecap="round" stroke-linejoin="round"/><path d="M507.0 468.7 C509.8 468.4 517.5 467.5 523.7 466.9 C529.9 466.3 537.5 465.8 544.0 465.0 C550.5 464.2 556.4 463.9 562.6 462.2 C568.8 460.5 575.8 457.1 581.0 454.8 C586.2 452.5 590.0 449.8 594.0 448.3 C598.0 446.8 602.0 446.7 605.0 445.6 C608.0 444.6 608.5 442.9 612.0 442.0 C615.5 441.1 623.7 440.3 626.0 440.0" fill="none" stroke="#f8d692" stroke-width="1.7" stroke-linecap="round" stroke-linejoin="round"/><path d="M514.4 451.0 C514.7 452.8 515.2 458.0 516.0 462.0 C516.8 466.0 518.5 472.8 519.0 475.0" fill="none" stroke="#f8d692" stroke-width="1.7" stroke-linecap="round" stroke-linejoin="round"/><path d="M592.0 440.0 L595.0 447.4" fill="none" stroke="#f8d692" stroke-width="1.7" stroke-linecap="round" stroke-linejoin="round"/><path d="M568.7 363.3 C569.5 367.5 571.8 380.8 573.7 388.3 C575.6 395.8 577.9 401.4 580.3 408.3 C582.7 415.2 585.8 423.9 588.0 430.0 C590.2 436.1 592.8 442.5 593.7 445.0" fill="none" stroke="#f8d692" stroke-width="1.7" stroke-linecap="round" stroke-linejoin="round"/><path d="M590.3 278.3 C590.9 280.0 594.0 285.5 593.7 288.3 C593.4 291.1 589.3 292.5 588.7 295.0 C588.1 297.5 589.5 299.1 590.3 303.3 C591.1 307.5 592.9 314.4 593.7 320.0 C594.5 325.6 594.2 331.1 595.3 336.7 C596.4 342.2 598.3 349.8 600.3 353.3 C602.2 356.9 605.9 357.2 607.0 358.0" fill="none" stroke="#f8d692" stroke-width="1.7" stroke-linecap="round" stroke-linejoin="round"/><path d="M588.7 295.0 C591.4 295.2 598.8 295.5 605.0 296.0 C611.2 296.5 622.5 297.7 626.0 298.0" fill="none" stroke="#f8d692" stroke-width="1.7" stroke-linecap="round" stroke-linejoin="round"/><path d="M573.7 325.0 C576.4 324.8 583.6 324.3 590.0 324.0 C596.4 323.7 606.0 324.0 612.0 323.0 C618.0 322.0 623.7 318.8 626.0 318.0" fill="none" stroke="#f8d692" stroke-width="1.7" stroke-linecap="round" stroke-linejoin="round"/><path d="M299.0 541.0 L300.0 536.0" fill="none" stroke="#f8d692" stroke-width="1.7" stroke-linecap="round" stroke-linejoin="round"/><path d="M542.0 541.0 C542.0 539.6 539.0 534.3 542.0 532.6 C545.0 530.9 554.5 530.6 560.0 531.0 C565.5 531.4 571.7 533.3 575.0 535.0 C578.3 536.7 579.2 540.0 580.0 541.0" fill="none" stroke="#f8d692" stroke-width="1.7" stroke-linecap="round" stroke-linejoin="round"/><path d="M454.5 320.8 C457.9 320.8 467.9 320.8 475.0 321.0 C482.1 321.2 489.5 322.0 497.0 322.0 C504.5 322.0 511.7 321.0 520.0 321.0 C528.3 321.0 542.5 321.8 547.0 322.0" fill="none" stroke="#fbe8ba" stroke-width="1.2" stroke-linecap="round" stroke-linejoin="round"/><path d="M518.0 276.0 C518.0 280.0 518.2 291.0 518.0 300.0 C517.8 309.0 517.0 320.0 517.0 330.0 C517.0 340.0 517.7 350.8 518.0 360.0 C518.3 369.2 518.8 380.8 519.0 385.0" fill="none" stroke="#fbe8ba" stroke-width="1.2" stroke-linecap="round" stroke-linejoin="round"/><path d="M548.0 285.0 C548.0 290.8 547.8 308.8 548.0 320.0 C548.2 331.2 548.8 346.7 549.0 352.0" fill="none" stroke="#fbe8ba" stroke-width="1.2" stroke-linecap="round" stroke-linejoin="round"/><path d="M507.0 302.5 C510.0 302.6 518.2 303.4 525.0 303.0 C531.8 302.6 544.2 300.5 548.0 300.0" fill="none" stroke="#fbe8ba" stroke-width="1.2" stroke-linecap="round" stroke-linejoin="round"/><path d="M462.0 336.0 C465.8 336.2 477.8 336.7 485.0 337.0 C492.2 337.3 497.5 338.0 505.0 338.0 C512.5 338.0 525.8 337.2 530.0 337.0" fill="none" stroke="#fbe8ba" stroke-width="1.2" stroke-linecap="round" stroke-linejoin="round"/><path d="M470.0 351.0 C475.0 351.0 490.0 351.0 500.0 351.0 C510.0 351.0 520.0 351.1 530.0 351.0 C540.0 350.9 550.0 350.7 560.0 350.5 C570.0 350.3 585.0 350.1 590.0 350.0" fill="none" stroke="#fbe8ba" stroke-width="1.2" stroke-linecap="round" stroke-linejoin="round"/><path d="M482.8 330.0 C482.8 338.3 482.8 365.0 482.8 380.0 C482.8 395.0 483.0 409.2 483.0 420.0 C483.0 430.8 483.0 440.8 483.0 445.0" fill="none" stroke="#fbe8ba" stroke-width="1.2" stroke-linecap="round" stroke-linejoin="round"/><path d="M505.3 330.0 C505.3 338.3 505.2 365.0 505.3 380.0 C505.4 395.0 505.9 413.3 506.0 420.0" fill="none" stroke="#fbe8ba" stroke-width="1.2" stroke-linecap="round" stroke-linejoin="round"/><path d="M497.0 325.0 L497.0 351.0" fill="none" stroke="#fbe8ba" stroke-width="1.2" stroke-linecap="round" stroke-linejoin="round"/><path d="M470.0 300.0 C470.3 303.7 472.0 313.5 472.0 322.0 C472.0 330.5 470.3 346.2 470.0 351.0" fill="none" stroke="#fbe8ba" stroke-width="1.2" stroke-linecap="round" stroke-linejoin="round"/><path d="M530.0 337.0 L531.0 368.0" fill="none" stroke="#fbe8ba" stroke-width="1.2" stroke-linecap="round" stroke-linejoin="round"/><path d="M460.0 368.0 C464.2 367.3 477.2 364.0 485.0 364.0 C492.8 364.0 503.3 367.3 507.0 368.0" fill="none" stroke="#fbe8ba" stroke-width="1.2" stroke-linecap="round" stroke-linejoin="round"/><path d="M489.0 400.0 C494.2 400.2 510.7 401.0 520.0 401.0 C529.3 401.0 540.8 400.2 545.0 400.0" fill="none" stroke="#fbe8ba" stroke-width="1.2" stroke-linecap="round" stroke-linejoin="round"/><path d="M466.0 430.0 C471.7 430.2 491.0 430.7 500.0 431.0 C509.0 431.3 516.7 431.8 520.0 432.0" fill="none" stroke="#fbe8ba" stroke-width="1.2" stroke-linecap="round" stroke-linejoin="round"/><path d="M465.0 452.0 C467.8 452.0 474.5 452.2 482.0 452.0 C489.5 451.8 505.3 451.2 510.0 451.0" fill="none" stroke="#fbe8ba" stroke-width="1.2" stroke-linecap="round" stroke-linejoin="round"/><path d="M560.0 310.0 L575.0 312.0" fill="none" stroke="#fbe8ba" stroke-width="1.2" stroke-linecap="round" stroke-linejoin="round"/><path d="M497.0 443.0 L497.0 470.0" fill="none" stroke="#fbe8ba" stroke-width="1.2" stroke-linecap="round" stroke-linejoin="round"/><path d="M507.0 368.3 C509.5 368.4 518.7 368.1 522.0 369.2 C525.3 370.3 524.0 374.3 527.0 375.0 C530.0 375.7 535.3 373.9 540.3 373.3 C545.3 372.8 553.1 373.1 557.0 371.7 C560.9 370.3 561.8 366.8 563.7 365.0 C565.7 363.2 565.1 361.8 568.7 360.8 C572.3 359.8 578.9 359.6 585.3 359.2 C591.7 358.8 603.4 358.4 607.0 358.3" fill="none" stroke="#fbc93f" stroke-width="2.3" stroke-linecap="round" stroke-linejoin="round"/><path d="M545.3 371.7 C545.4 373.6 544.5 381.9 546.2 383.3 C547.9 384.7 552.8 382.1 555.3 380.0 C557.8 377.9 560.0 372.5 561.0 371.0" fill="none" stroke="#fbc93f" stroke-width="2.0" stroke-linecap="round" stroke-linejoin="round"/><path d="M607.0 358.3 C607.0 359.6 607.1 363.1 607.0 366.0 C606.9 368.9 606.6 374.3 606.5 376.0" fill="none" stroke="#fbc93f" stroke-width="2.0" stroke-linecap="round" stroke-linejoin="round"/><path d="M590.3 278.3 C590.9 280.0 594.0 285.5 593.7 288.3 C593.4 291.1 589.3 292.5 588.7 295.0 C588.1 297.5 590.0 301.9 590.3 303.3" fill="none" stroke="#f9cf62" stroke-width="2.0" stroke-linecap="round" stroke-linejoin="round"/><path d="M607.0 358.3 C608.3 357.2 611.8 353.6 615.0 352.0 C618.2 350.4 624.2 349.5 626.0 349.0" fill="none" stroke="#f9cf62" stroke-width="2.0" stroke-linecap="round" stroke-linejoin="round"/><path d="M380.0 268.0 C380.5 268.6 380.4 269.4 383.0 271.7 C385.6 274.0 392.1 279.1 395.3 281.7 C398.5 284.3 398.9 285.3 402.0 287.5 C405.1 289.7 409.8 292.4 413.7 295.0 C417.6 297.6 421.4 300.5 425.3 303.3 C429.2 306.1 433.1 309.2 437.0 311.7 C440.9 314.2 445.8 316.8 448.7 318.3 C451.6 319.8 453.5 320.4 454.5 320.8" fill="none" stroke="#f4a451" stroke-width="2.6" stroke-linecap="round" stroke-linejoin="round"/><path d="M567.0 275.8 C563.3 275.8 552.9 275.9 545.0 276.0 C537.1 276.1 525.0 276.0 519.5 276.7 C514.0 277.4 515.5 278.8 512.0 280.0 C508.5 281.2 503.1 282.5 498.7 284.2 C494.2 285.9 489.8 287.5 485.3 290.0 C480.9 292.5 475.9 295.9 472.0 299.2 C468.1 302.5 464.6 306.5 462.0 310.0 C459.4 313.5 457.9 316.1 456.2 320.0 C454.5 323.9 453.1 329.1 452.0 333.3 C450.9 337.5 450.1 341.4 449.5 345.0 C448.9 348.6 448.0 350.3 448.7 355.0 C449.4 359.7 452.0 368.3 453.7 373.3 C455.4 378.3 457.2 381.1 458.7 385.0 C460.2 388.9 461.8 392.5 462.8 396.7 C463.8 400.9 464.4 405.3 464.5 410.0 C464.6 414.7 463.8 420.0 463.7 425.0 C463.6 430.0 463.8 434.4 464.2 440.0 C464.6 445.6 465.4 452.3 466.0 458.5 C466.6 464.7 467.8 470.8 468.0 477.0 C468.2 483.2 467.5 489.3 467.0 495.5 C466.5 501.7 465.7 508.4 465.1 514.0 C464.5 519.6 463.3 524.5 463.3 529.0 C463.3 533.5 464.8 539.0 465.1 541.0" fill="none" stroke="#f4a451" stroke-width="2.4" stroke-linecap="round" stroke-linejoin="round"/><path d="M567.0 275.8 C563.3 275.8 552.9 275.9 545.0 276.0 C537.1 276.1 523.8 276.6 519.5 276.7" fill="none" stroke="#f6b57a" stroke-width="2.4" stroke-linecap="round" stroke-linejoin="round"/><path d="M282.0 410.8 C284.8 410.4 293.1 408.3 298.7 408.3 C304.2 408.3 309.8 410.0 315.3 410.8 C320.9 411.6 326.4 412.9 332.0 413.3 C337.6 413.7 343.1 413.9 348.7 413.3 C354.2 412.8 359.8 410.3 365.3 410.0 C370.9 409.7 375.9 411.1 382.0 411.7 C388.1 412.2 397.6 413.4 402.0 413.3 C406.4 413.2 404.8 411.4 408.7 410.8 C412.6 410.2 419.8 409.7 425.3 410.0 C430.9 410.3 436.4 412.8 442.0 412.5 C447.6 412.2 453.1 410.4 458.7 408.3 C464.2 406.2 469.8 402.1 475.3 400.0 C480.9 397.9 486.7 396.6 492.0 395.8 C497.3 395.0 502.3 395.1 507.0 395.0 C511.7 394.9 516.7 395.7 520.3 395.0 C523.9 394.3 524.0 391.5 528.7 390.8 C533.4 390.1 542.6 390.2 548.7 390.8 C554.8 391.4 559.8 393.9 565.3 394.2 C570.8 394.5 576.7 394.0 582.0 392.5 C587.3 391.0 592.3 387.9 597.0 385.0 C601.7 382.1 605.5 377.8 610.3 375.0 C615.1 372.2 623.4 369.4 626.0 368.3" fill="none" stroke="#f4a451" stroke-width="2.6" stroke-linecap="round" stroke-linejoin="round"/><path d="M447.0 411.7 C448.9 409.8 455.4 404.2 458.7 400.0 C462.0 395.8 462.8 390.3 467.0 386.7 C471.2 383.1 478.1 380.8 483.7 378.3 C489.2 375.8 495.6 373.6 500.3 371.7 C505.0 369.8 510.9 367.3 512.0 366.7 C513.1 366.1 507.8 368.0 507.0 368.3" fill="none" stroke="#f4a451" stroke-width="2.2" stroke-linecap="round" stroke-linejoin="round"/><rect x="331.1" y="285.2" width="11.7" height="5.2" rx="0.8" fill="#f5a253" stroke="#e8924a" stroke-width="0.4"/><text transform="translate(337.0 289.3) scale(0.86 1)" font-size="3.8" fill="#fff" text-anchor="middle">S125</text><rect x="326.1" y="325.4" width="11.7" height="5.2" rx="0.8" fill="#f5a253" stroke="#e8924a" stroke-width="0.4"/><text transform="translate(332.0 329.5) scale(0.86 1)" font-size="3.8" fill="#fff" text-anchor="middle">S125</text><rect x="315.6" y="393.7" width="11.7" height="5.2" rx="0.8" fill="#f5a253" stroke="#e8924a" stroke-width="0.4"/><text transform="translate(321.5 397.8) scale(0.86 1)" font-size="3.8" fill="#fff" text-anchor="middle">S125</text><rect x="329.8" y="423.7" width="11.7" height="5.2" rx="0.8" fill="#f5a253" stroke="#e8924a" stroke-width="0.4"/><text transform="translate(335.7 427.8) scale(0.86 1)" font-size="3.8" fill="#fff" text-anchor="middle">S125</text><rect x="350.1" y="479.6" width="11.7" height="5.2" rx="0.8" fill="#f5a253" stroke="#e8924a" stroke-width="0.4"/><text transform="translate(356.0 483.7) scale(0.86 1)" font-size="3.8" fill="#fff" text-anchor="middle">S125</text><rect x="351.1" y="498.5" width="11.7" height="5.2" rx="0.8" fill="#f5a253" stroke="#e8924a" stroke-width="0.4"/><text transform="translate(357.0 502.6) scale(0.86 1)" font-size="3.8" fill="#fff" text-anchor="middle">S125</text><rect x="299.4" y="361.6" width="11.7" height="5.2" rx="0.8" fill="#f5a253" stroke="#e8924a" stroke-width="0.4"/><text transform="translate(305.3 365.7) scale(0.86 1)" font-size="3.8" fill="#fff" text-anchor="middle">S353</text><rect x="368.3" y="367.1" width="11.7" height="5.2" rx="0.8" fill="#f5a253" stroke="#e8924a" stroke-width="0.4"/><text transform="translate(374.2 371.2) scale(0.86 1)" font-size="3.8" fill="#fff" text-anchor="middle">S353</text><rect x="380.3" y="369.1" width="11.7" height="5.2" rx="0.8" fill="#f5a253" stroke="#e8924a" stroke-width="0.4"/><text transform="translate(386.2 373.2) scale(0.86 1)" font-size="3.8" fill="#fff" text-anchor="middle">S353</text><rect x="336.8" y="495.7" width="11.7" height="5.2" rx="0.8" fill="#f5a253" stroke="#e8924a" stroke-width="0.4"/><text transform="translate(342.7 499.8) scale(0.86 1)" font-size="3.8" fill="#fff" text-anchor="middle">S356</text><rect x="404.6" y="487.4" width="11.7" height="5.2" rx="0.8" fill="#f5a253" stroke="#e8924a" stroke-width="0.4"/><text transform="translate(410.5 491.5) scale(0.86 1)" font-size="3.8" fill="#fff" text-anchor="middle">S356</text><rect x="492.1" y="475.7" width="11.7" height="5.2" rx="0.8" fill="#f5a253" stroke="#e8924a" stroke-width="0.4"/><text transform="translate(498.0 479.8) scale(0.86 1)" font-size="3.8" fill="#fff" text-anchor="middle">S356</text><rect x="603.6" y="439.6" width="11.7" height="5.2" rx="0.8" fill="#f5a253" stroke="#e8924a" stroke-width="0.4"/><text transform="translate(609.5 443.7) scale(0.86 1)" font-size="3.8" fill="#fff" text-anchor="middle">S356</text><rect x="474.6" y="451.3" width="11.7" height="5.2" rx="0.8" fill="#f5a253" stroke="#e8924a" stroke-width="0.4"/><text transform="translate(480.5 455.4) scale(0.86 1)" font-size="3.8" fill="#fff" text-anchor="middle">S243</text><rect x="439.1" y="358.7" width="11.7" height="5.2" rx="0.8" fill="#f5a253" stroke="#e8924a" stroke-width="0.4"/><text transform="translate(445.0 362.8) scale(0.86 1)" font-size="3.8" fill="#fff" text-anchor="middle">S353</text><rect x="293.8" y="536.4" width="11.7" height="5.2" rx="0.8" fill="#f5a253" stroke="#e8924a" stroke-width="0.4"/><text transform="translate(299.6 540.5) scale(0.86 1)" font-size="3.8" fill="#fff" text-anchor="middle">S356</text><rect x="411.9" y="270.7" width="11.7" height="5.2" rx="0.8" fill="#ef6b6b" stroke="#e05a5a" stroke-width="0.4"/><text transform="translate(417.8 274.8) scale(0.86 1)" font-size="3.8" fill="#fff" text-anchor="middle">G345</text><rect x="414.1" y="326.9" width="11.7" height="5.2" rx="0.8" fill="#ef6b6b" stroke="#e05a5a" stroke-width="0.4"/><text transform="translate(420.0 331.0) scale(0.86 1)" font-size="3.8" fill="#fff" text-anchor="middle">G345</text><rect x="413.6" y="294.1" width="9.4" height="5.2" rx="0.8" fill="#36c2a0" stroke="#2fb392" stroke-width="0.4"/><rect x="413.6" y="294.1" width="9.4" height="1.2" fill="#e8504f"/><text transform="translate(418.3 298.2) scale(0.86 1)" font-size="3.8" fill="#fff" text-anchor="middle">S88</text><rect x="327.0" y="410.4" width="9.4" height="5.2" rx="0.8" fill="#36c2a0" stroke="#2fb392" stroke-width="0.4"/><rect x="327.0" y="410.4" width="9.4" height="1.2" fill="#e8504f"/><text transform="translate(331.7 414.5) scale(0.86 1)" font-size="3.8" fill="#fff" text-anchor="middle">G40</text><rect x="355.1" y="407.7" width="9.4" height="5.2" rx="0.8" fill="#36c2a0" stroke="#2fb392" stroke-width="0.4"/><rect x="355.1" y="407.7" width="9.4" height="1.2" fill="#e8504f"/><text transform="translate(359.8 411.8) scale(0.86 1)" font-size="3.8" fill="#fff" text-anchor="middle">G40</text><rect x="399.8" y="407.4" width="9.4" height="5.2" rx="0.8" fill="#36c2a0" stroke="#2fb392" stroke-width="0.4"/><rect x="399.8" y="407.4" width="9.4" height="1.2" fill="#e8504f"/><text transform="translate(404.5 411.5) scale(0.86 1)" font-size="3.8" fill="#fff" text-anchor="middle">G40</text><rect x="459.0" y="459.6" width="14.0" height="5.2" rx="0.8" fill="#36c2a0" stroke="#2fb392" stroke-width="0.4"/><rect x="459.0" y="459.6" width="14.0" height="1.2" fill="#e8504f"/><text transform="translate(466.0 463.7) scale(0.86 1)" font-size="3.8" fill="#fff" text-anchor="middle">G4011</text><rect x="601.5" y="369.1" width="9.4" height="5.2" rx="0.8" fill="#36c2a0" stroke="#2fb392" stroke-width="0.4"/><rect x="601.5" y="369.1" width="9.4" height="1.2" fill="#e8504f"/><text transform="translate(606.2 373.2) scale(0.86 1)" font-size="3.8" fill="#fff" text-anchor="middle">S39</text><rect x="596.1" y="354.9" width="11.7" height="5.2" rx="0.8" fill="#36c2a0" stroke="#2fb392" stroke-width="0.4"/><rect x="596.1" y="354.9" width="11.7" height="1.2" fill="#e8504f"/><text transform="translate(602.0 359.0) scale(0.86 1)" font-size="3.8" fill="#fff" text-anchor="middle">G328</text><rect x="362.8" y="313.2" width="11.7" height="5.2" rx="0.8" fill="#ffffff" stroke="#c4c4c4" stroke-width="0.4"/><text transform="translate(368.7 317.3) scale(0.86 1)" font-size="3.8" fill="#777" text-anchor="middle">X304</text><rect x="429.1" y="300.7" width="11.7" height="5.2" rx="0.8" fill="#ffffff" stroke="#c4c4c4" stroke-width="0.4"/><text transform="translate(435.0 304.8) scale(0.86 1)" font-size="3.8" fill="#777" text-anchor="middle">X306</text><rect x="402.8" y="347.1" width="11.7" height="5.2" rx="0.8" fill="#ffffff" stroke="#c4c4c4" stroke-width="0.4"/><text transform="translate(408.7 351.2) scale(0.86 1)" font-size="3.8" fill="#777" text-anchor="middle">X201</text><rect x="367.3" y="402.1" width="11.7" height="5.2" rx="0.8" fill="#ffffff" stroke="#c4c4c4" stroke-width="0.4"/><text transform="translate(373.2 406.2) scale(0.86 1)" font-size="3.8" fill="#777" text-anchor="middle">X202</text><rect x="368.8" y="476.7" width="11.7" height="5.2" rx="0.8" fill="#ffffff" stroke="#c4c4c4" stroke-width="0.4"/><text transform="translate(374.6 480.8) scale(0.86 1)" font-size="3.8" fill="#777" text-anchor="middle">X202</text><rect x="442.3" y="414.4" width="11.7" height="5.2" rx="0.8" fill="#ffffff" stroke="#c4c4c4" stroke-width="0.4"/><text transform="translate(448.2 418.5) scale(0.86 1)" font-size="3.8" fill="#777" text-anchor="middle">X336</text><rect x="438.5" y="533.7" width="11.7" height="5.2" rx="0.8" fill="#ffffff" stroke="#c4c4c4" stroke-width="0.4"/><text transform="translate(444.4 537.8) scale(0.86 1)" font-size="3.8" fill="#777" text-anchor="middle">X301</text><rect x="549.6" y="448.4" width="11.7" height="5.2" rx="0.8" fill="#ffffff" stroke="#c4c4c4" stroke-width="0.4"/><text transform="translate(555.5 452.5) scale(0.86 1)" font-size="3.8" fill="#777" text-anchor="middle">X205</text><rect x="591.1" y="349.4" width="11.7" height="5.2" rx="0.8" fill="#ffffff" stroke="#c4c4c4" stroke-width="0.4"/><text transform="translate(597.0 353.5) scale(0.86 1)" font-size="3.8" fill="#777" text-anchor="middle">X202</text><text transform="translate(304.0 297.3) scale(0.86 1)" font-size="5.8" fill="#7485ab" text-anchor="middle" stroke="#f7f5f2" stroke-width="1.6" paint-order="stroke" stroke-linejoin="round">西庄</text><text transform="translate(341.5 302.3) scale(0.86 1)" font-size="5.8" fill="#7485ab" text-anchor="middle" stroke="#f7f5f2" stroke-width="1.6" paint-order="stroke" stroke-linejoin="round">朱庄</text><path d="M311.5 333.1 C310.7 331.5 307.9 329.3 307.9 326.7 A3.6 3.9 0 1 1 315.1 326.7 C315.1 329.3 312.3 331.5 311.5 333.1Z" fill="#2fb679"/><path d="M310.0 328.7 V324.6 h1.3 V328.7z M311.8 328.7 V326.2 h1.3 V328.7z" fill="#fff"/><text transform="translate(312.0 338.2) scale(0.86 1)" font-size="6" fill="#2b9b82" text-anchor="middle" stroke="#f7f5f2" stroke-width="1.6" paint-order="stroke" stroke-linejoin="round">仪征捺山</text><text transform="translate(312.0 344.4) scale(0.86 1)" font-size="6" fill="#2b9b82" text-anchor="middle" stroke="#f7f5f2" stroke-width="1.6" paint-order="stroke" stroke-linejoin="round">地质公园</text><path d="M373.3 334.0 C372.5 332.4 369.7 330.2 369.7 327.6 A3.6 3.9 0 1 1 376.9 327.6 C376.9 330.2 374.1 332.4 373.3 334.0Z" fill="#2fb679"/><path d="M371.8 329.6 V325.5 h1.3 V329.6z M373.6 329.6 V327.1 h1.3 V329.6z" fill="#fff"/><text transform="translate(377.6 327.2) scale(0.86 1)" font-size="6" fill="#2b9b82" text-anchor="start" stroke="#f7f5f2" stroke-width="1.6" paint-order="stroke" stroke-linejoin="round">扬州西郊</text><text transform="translate(377.6 334.2) scale(0.86 1)" font-size="6" fill="#2b9b82" text-anchor="start" stroke="#f7f5f2" stroke-width="1.6" paint-order="stroke" stroke-linejoin="round">森林公园</text><text transform="translate(282.5 400.7) scale(0.86 1)" font-size="6" fill="#2b9b82" text-anchor="start" stroke="#f7f5f2" stroke-width="1.6" paint-order="stroke" stroke-linejoin="round">铜山森林公园</text><text transform="translate(282.5 416.3) scale(0.86 1)" font-size="6" fill="#2b9b82" text-anchor="start" stroke="#f7f5f2" stroke-width="1.6" paint-order="stroke" stroke-linejoin="round">扬州</text><text transform="translate(282.5 422.6) scale(0.86 1)" font-size="6" fill="#2b9b82" text-anchor="start" stroke="#f7f5f2" stroke-width="1.6" paint-order="stroke" stroke-linejoin="round">园艺博览会</text><text transform="translate(391.0 274.5) rotate(38) scale(0.86 1)" font-size="5.8" fill="#222" text-anchor="middle" font-weight="bold">启扬高速</text><text transform="translate(461.7 279.5) rotate(42) scale(0.86 1)" font-size="5.8" fill="#222" text-anchor="middle" font-weight="bold">北路</text><text transform="translate(428.0 413.0) rotate(4) scale(0.86 1)" font-size="6.2" fill="#222" text-anchor="middle" font-weight="bold">沪陕高速</text><text transform="translate(398.0 448.0) rotate(-48) scale(0.86 1)" font-size="5.6" fill="#222" text-anchor="middle" font-weight="bold" stroke="#f7f5f2" stroke-width="1.6" paint-order="stroke" stroke-linejoin="round">宁通线</text><text transform="translate(514.0 471.0) rotate(-12) scale(0.86 1)" font-size="6" fill="#222" text-anchor="middle" font-weight="bold" stroke="#f7f5f2" stroke-width="1.6" paint-order="stroke" stroke-linejoin="round">春江路</text><path d="M518.5 282.9 C517.7 281.3 514.9 279.1 514.9 276.5 A3.6 3.9 0 1 1 522.1 276.5 C522.1 279.1 519.3 281.3 518.5 282.9Z" fill="#2fb679"/><path d="M517.0 278.5 V274.4 h1.3 V278.5z M518.8 278.5 V276.0 h1.3 V278.5z" fill="#fff"/><text transform="translate(499.5 277.8) scale(0.86 1)" font-size="6" fill="#2b9b82" text-anchor="middle" stroke="#f7f5f2" stroke-width="1.6" paint-order="stroke" stroke-linejoin="round">扬州华侨城</text><text transform="translate(501.5 284.0) scale(0.86 1)" font-size="6" fill="#2b9b82" text-anchor="middle" stroke="#f7f5f2" stroke-width="1.6" paint-order="stroke" stroke-linejoin="round">梦幻之城</text><text transform="translate(579.0 275.3) scale(0.86 1)" font-size="6" fill="#e0575a" text-anchor="middle" stroke="#f7f5f2" stroke-width="1.6" paint-order="stroke" stroke-linejoin="round">江苏省邵伯</text><text transform="translate(579.0 282.0) scale(0.86 1)" font-size="6" fill="#e0575a" text-anchor="middle" stroke="#f7f5f2" stroke-width="1.6" paint-order="stroke" stroke-linejoin="round">闸管理所</text><path d="M555.3 315.9 C554.5 314.3 551.7 312.1 551.7 309.5 A3.6 3.9 0 1 1 558.9 309.5 C558.9 312.1 556.1 314.3 555.3 315.9Z" fill="#2fb679"/><path d="M553.8 311.5 V307.4 h1.3 V311.5z M555.6 311.5 V309.0 h1.3 V311.5z" fill="#fff"/><text transform="translate(560.0 312.0) scale(0.86 1)" font-size="6" fill="#2b9b82" text-anchor="start" stroke="#f7f5f2" stroke-width="1.6" paint-order="stroke" stroke-linejoin="round">茱萸湾风景区</text><path d="M512.3 324.2 C511.5 322.6 508.7 320.4 508.7 317.8 A3.6 3.9 0 1 1 515.9 317.8 C515.9 320.4 513.1 322.6 512.3 324.2Z" fill="#2fb679"/><path d="M510.8 319.8 V315.7 h1.3 V319.8z M512.6 319.8 V317.3 h1.3 V319.8z" fill="#fff"/><text transform="translate(517.0 317.5) scale(0.86 1)" font-size="6" fill="#2b9b82" text-anchor="start" stroke="#f7f5f2" stroke-width="1.6" paint-order="stroke" stroke-linejoin="round">扬州市蜀冈</text><text transform="translate(517.0 325.0) scale(0.86 1)" font-size="6" fill="#2b9b82" text-anchor="start" stroke="#f7f5f2" stroke-width="1.6" paint-order="stroke" stroke-linejoin="round">唐子城风景区</text><path d="M498.7 328.4 C497.9 326.8 495.1 324.6 495.1 322.0 A3.6 3.9 0 1 1 502.3 322.0 C502.3 324.6 499.5 326.8 498.7 328.4Z" fill="#2fb679"/><path d="M497.2 324.0 V319.9 h1.3 V324.0z M499.0 324.0 V321.5 h1.3 V324.0z" fill="#fff"/><text transform="translate(464.0 322.5) scale(0.86 1)" font-size="6" fill="#2b9b82" text-anchor="start" stroke="#f7f5f2" stroke-width="1.6" paint-order="stroke" stroke-linejoin="round">大运河</text><text transform="translate(482.0 329.2) scale(0.86 1)" font-size="6" fill="#2b9b82" text-anchor="start" stroke="#f7f5f2" stroke-width="1.6" paint-order="stroke" stroke-linejoin="round">大明寺</text><text transform="translate(614.8 312.5) scale(0.86 1)" font-size="8" fill="#3a3a3a" text-anchor="middle" stroke="#f7f5f2" stroke-width="1.6" paint-order="stroke" stroke-linejoin="round">江都区</text><text transform="translate(489.0 352.8) scale(0.86 1)" font-size="8.5" fill="#3a3a3a" text-anchor="start" stroke="#f7f5f2" stroke-width="1.6" paint-order="stroke" stroke-linejoin="round">扬州市</text><text transform="translate(493.0 369.0) scale(0.86 1)" font-size="6.5" fill="#3a3a3a" text-anchor="middle" stroke="#f7f5f2" stroke-width="1.6" paint-order="stroke" stroke-linejoin="round">邗江区</text><path d="M454.0 359.7 C453.2 358.1 450.4 355.9 450.4 353.3 A3.6 3.9 0 1 1 457.6 353.3 C457.6 355.9 454.8 358.1 454.0 359.7Z" fill="#3f8cf0"/><rect x="452.3" y="351.2" width="3.4" height="4" rx="0.6" fill="#fff"/><rect x="453.1" y="352.0" width="1.8" height="1.6" fill="#3f8cf0"/><text transform="translate(458.5 357.8) scale(0.86 1)" font-size="6" fill="#4b7fd1" text-anchor="start" stroke="#f7f5f2" stroke-width="1.6" paint-order="stroke" stroke-linejoin="round">扬州站</text><path d="M584.8 345.9 C584.0 344.3 581.2 342.1 581.2 339.5 A3.6 3.9 0 1 1 588.4 339.5 C588.4 342.1 585.6 344.3 584.8 345.9Z" fill="#3f8cf0"/><rect x="583.1" y="337.4" width="3.4" height="4" rx="0.6" fill="#fff"/><rect x="583.9" y="338.2" width="1.8" height="1.6" fill="#3f8cf0"/><text transform="translate(590.3 340.0) scale(0.86 1)" font-size="6" fill="#4b7fd1" text-anchor="start" stroke="#f7f5f2" stroke-width="1.6" paint-order="stroke" stroke-linejoin="round">扬州东部客运</text><text transform="translate(590.3 346.0) scale(0.86 1)" font-size="6" fill="#4b7fd1" text-anchor="start" stroke="#f7f5f2" stroke-width="1.6" paint-order="stroke" stroke-linejoin="round">枢纽交通中心</text><path d="M525.8 365.4 C525.0 363.8 522.2 361.6 522.2 359.0 A3.6 3.9 0 1 1 529.4 359.0 C529.4 361.6 526.6 363.8 525.8 365.4Z" fill="#2fb679"/><path d="M524.3 361.0 V356.9 h1.3 V361.0z M526.1 361.0 V358.5 h1.3 V361.0z" fill="#fff"/><text transform="translate(531.0 361.5) scale(0.86 1)" font-size="6" fill="#2b9b82" text-anchor="start" stroke="#f7f5f2" stroke-width="1.6" paint-order="stroke" stroke-linejoin="round">何园</text><path d="M512.0 393.4 C511.2 391.8 508.4 389.6 508.4 387.0 A3.6 3.9 0 1 1 515.6 387.0 C515.6 389.6 512.8 391.8 512.0 393.4Z" fill="#2fb679"/><path d="M510.5 389.0 V384.9 h1.3 V389.0z M512.3 389.0 V386.5 h1.3 V389.0z" fill="#fff"/><text transform="translate(517.0 389.6) scale(0.86 1)" font-size="6" fill="#2b9b82" text-anchor="start" stroke="#f7f5f2" stroke-width="1.6" paint-order="stroke" stroke-linejoin="round">运河三湾风景区</text><path d="M490.0 408.4 C489.2 406.8 486.4 404.6 486.4 402.0 A3.6 3.9 0 1 1 493.6 402.0 C493.6 404.6 490.8 406.8 490.0 408.4Z" fill="#3f9be8"/><rect x="488.3" y="399.9" width="3.4" height="4" rx="0.6" fill="#fff"/><rect x="489.1" y="400.7" width="1.8" height="1.6" fill="#3f9be8"/><text transform="translate(494.5 401.5) scale(0.86 1)" font-size="6" fill="#5a8fd6" text-anchor="start" stroke="#f7f5f2" stroke-width="1.6" paint-order="stroke" stroke-linejoin="round">扬州大学</text><text transform="translate(494.5 408.0) scale(0.86 1)" font-size="6" fill="#5a8fd6" text-anchor="start" stroke="#f7f5f2" stroke-width="1.6" paint-order="stroke" stroke-linejoin="round">(扬子津校区)</text><path d="M522.8 426.7 C522.0 425.1 519.2 422.9 519.2 420.3 A3.6 3.9 0 1 1 526.4 420.3 C526.4 422.9 523.6 425.1 522.8 426.7Z" fill="#2fb679"/><path d="M521.3 422.3 V418.2 h1.3 V422.3z M523.1 422.3 V419.8 h1.3 V422.3z" fill="#fff"/><text transform="translate(527.8 422.9) scale(0.86 1)" font-size="6" fill="#2b9b82" text-anchor="start" stroke="#f7f5f2" stroke-width="1.6" paint-order="stroke" stroke-linejoin="round">扬子郊野公园</text><path d="M497.0 448.7 C496.2 447.1 493.4 444.9 493.4 442.3 A3.6 3.9 0 1 1 500.6 442.3 C500.6 444.9 497.8 447.1 497.0 448.7Z" fill="#3f9be8"/><rect x="495.3" y="440.2" width="3.4" height="4" rx="0.6" fill="#fff"/><rect x="496.1" y="441.0" width="1.8" height="1.6" fill="#3f9be8"/><text transform="translate(501.5 442.0) scale(0.86 1)" font-size="6" fill="#5a8fd6" text-anchor="start" stroke="#f7f5f2" stroke-width="1.6" paint-order="stroke" stroke-linejoin="round">江苏旅游职业</text><text transform="translate(501.5 448.5) scale(0.86 1)" font-size="6" fill="#5a8fd6" text-anchor="start" stroke="#f7f5f2" stroke-width="1.6" paint-order="stroke" stroke-linejoin="round">学院(新校区)</text><path d="M409.8 429.7 C409.0 428.1 406.2 425.9 406.2 423.3 A3.6 3.9 0 1 1 413.4 423.3 C413.4 425.9 410.6 428.1 409.8 429.7Z" fill="#4f8fe8"/><rect x="408.1" y="421.2" width="3.4" height="4" rx="0.6" fill="#fff"/><rect x="408.9" y="422.0" width="1.8" height="1.6" fill="#4f8fe8"/><text transform="translate(415.0 427.0) scale(0.86 1)" font-size="6" fill="#4b7fd1" text-anchor="start" stroke="#f7f5f2" stroke-width="1.6" paint-order="stroke" stroke-linejoin="round">华腾工业园区</text><text transform="translate(590.3 413.7) scale(0.86 1)" font-size="5.5" fill="#7485ab" text-anchor="middle" stroke="#f7f5f2" stroke-width="1.6" paint-order="stroke" stroke-linejoin="round">太平</text><text transform="translate(432.0 453.7) scale(0.86 1)" font-size="5.8" fill="#7485ab" text-anchor="middle" stroke="#f7f5f2" stroke-width="1.6" paint-order="stroke" stroke-linejoin="round">朴席镇</text><text transform="translate(403.5 465.0) scale(0.86 1)" font-size="6" fill="#5a8fd6" text-anchor="middle" stroke="#f7f5f2" stroke-width="1.6" paint-order="stroke" stroke-linejoin="round">古运河</text><text transform="translate(332.5 478.2) scale(0.86 1)" font-size="7.6" fill="#3a3a3a" text-anchor="middle" stroke="#f7f5f2" stroke-width="1.6" paint-order="stroke" stroke-linejoin="round">仪征市</text><path d="M378.7 498.7 C377.9 497.1 375.1 494.9 375.1 492.3 A3.6 3.9 0 1 1 382.3 492.3 C382.3 494.9 379.5 497.1 378.7 498.7Z" fill="#4f8fe8"/><rect x="377.0" y="490.2" width="3.4" height="4" rx="0.6" fill="#fff"/><rect x="377.8" y="491.0" width="1.8" height="1.6" fill="#4f8fe8"/><text transform="translate(379.3 503.8) scale(0.86 1)" font-size="6" fill="#4b7fd1" text-anchor="middle" stroke="#f7f5f2" stroke-width="1.6" paint-order="stroke" stroke-linejoin="round">利港工业园</text><path d="M283.0 494.9 C282.2 493.3 279.4 491.1 279.4 488.5 A3.6 3.9 0 1 1 286.6 488.5 C286.6 491.1 283.8 493.3 283.0 494.9Z" fill="#3f6ff0"/><rect x="281.3" y="486.4" width="3.4" height="4" rx="0.6" fill="#fff"/><rect x="282.1" y="487.2" width="1.8" height="1.6" fill="#3f6ff0"/><text transform="translate(289.5 516.0) scale(0.86 1)" font-size="5.2" fill="#7485ab" text-anchor="middle" stroke="#f7f5f2" stroke-width="1.6" paint-order="stroke" stroke-linejoin="round">扬家沟</text><path d="M471.3 522.8 C470.5 521.2 467.7 519.0 467.7 516.4 A3.6 3.9 0 1 1 474.9 516.4 C474.9 519.0 472.1 521.2 471.3 522.8Z" fill="#2fb679"/><path d="M469.8 518.4 V514.3 h1.3 V518.4z M471.6 518.4 V515.9 h1.3 V518.4z" fill="#fff"/><text transform="translate(455.8 517.0) scale(0.86 1)" font-size="6" fill="#2b9b82" text-anchor="middle" stroke="#f7f5f2" stroke-width="1.6" paint-order="stroke" stroke-linejoin="round">润扬湿地</text><text transform="translate(455.8 523.0) scale(0.86 1)" font-size="6" fill="#2b9b82" text-anchor="middle" stroke="#f7f5f2" stroke-width="1.6" paint-order="stroke" stroke-linejoin="round">森林公园</text><path d="M483.7 502.4 C482.9 500.8 480.1 498.6 480.1 496.0 A3.6 3.9 0 1 1 487.3 496.0 C487.3 498.6 484.5 500.8 483.7 502.4Z" fill="#2fb679"/><path d="M482.2 498.0 V493.9 h1.3 V498.0z M484.0 498.0 V495.5 h1.3 V498.0z" fill="#fff"/><text transform="translate(488.5 498.6) scale(0.86 1)" font-size="6" fill="#2b9b82" text-anchor="start" stroke="#f7f5f2" stroke-width="1.6" paint-order="stroke" stroke-linejoin="round">瓜洲古渡</text><text transform="translate(425.8 538.3) scale(0.86 1)" font-size="5.8" fill="#7485ab" text-anchor="middle" stroke="#f7f5f2" stroke-width="1.6" paint-order="stroke" stroke-linejoin="round">世业镇</text><path d="M501.3 537.9 C500.5 536.3 497.7 534.1 497.7 531.5 A3.6 3.9 0 1 1 504.9 531.5 C504.9 534.1 502.1 536.3 501.3 537.9Z" fill="#2fb679"/><path d="M499.8 533.5 V529.4 h1.3 V533.5z M501.6 533.5 V531.0 h1.3 V533.5z" fill="#fff"/><text transform="translate(506.0 535.6) scale(0.86 1)" font-size="6" fill="#2b9b82" text-anchor="start" stroke="#f7f5f2" stroke-width="1.6" paint-order="stroke" stroke-linejoin="round">镇江金山风景区</text><path d="M553.3 517.2 C552.5 515.6 549.7 513.4 549.7 510.8 A3.6 3.9 0 1 1 556.9 510.8 C556.9 513.4 554.1 515.6 553.3 517.2Z" fill="#2fb679"/><path d="M551.8 512.8 V508.7 h1.3 V512.8z M553.6 512.8 V510.3 h1.3 V512.8z" fill="#fff"/><text transform="translate(558.5 513.9) scale(0.86 1)" font-size="6" fill="#2b9b82" text-anchor="start" stroke="#f7f5f2" stroke-width="1.6" paint-order="stroke" stroke-linejoin="round">焦山风景区</text><text transform="translate(569.8 478.5) scale(0.86 1)" font-size="5.2" fill="#7485ab" text-anchor="middle" stroke="#f7f5f2" stroke-width="1.6" paint-order="stroke" stroke-linejoin="round">顺安</text><text transform="translate(590.8 482.4) scale(0.86 1)" font-size="5.2" fill="#7485ab" text-anchor="middle" stroke="#f7f5f2" stroke-width="1.6" paint-order="stroke" stroke-linejoin="round">人民后细</text><path d="M601.4 475.4 C600.6 473.8 597.8 471.6 597.8 469.0 A3.6 3.9 0 1 1 605.0 469.0 C605.0 471.6 602.2 473.8 601.4 475.4Z" fill="#e8585a"/><rect x="599.7" y="466.9" width="3.4" height="4" rx="0.6" fill="#fff"/><rect x="600.5" y="467.7" width="1.8" height="1.6" fill="#e8585a"/><text transform="translate(606.0 468.5) scale(0.86 1)" font-size="6" fill="#e0575a" text-anchor="start" stroke="#f7f5f2" stroke-width="1.6" paint-order="stroke" stroke-linejoin="round">镇江新区</text><text transform="translate(606.0 475.5) scale(0.86 1)" font-size="6" fill="#e0575a" text-anchor="start" stroke="#f7f5f2" stroke-width="1.6" paint-order="stroke" stroke-linejoin="round">产业园区</text><ellipse cx="626" cy="438.3" rx="3.2" ry="4" fill="#9a4ff0"/><rect x="622" y="387" width="3.2" height="4.5" rx="0.6" fill="#fff" stroke="#ccc" stroke-width="0.3"/><rect x="282.300" y="334" width="2.600" height="5" rx="0.6" fill="#fff" stroke="#ccc" stroke-width="0.3"/><ellipse cx="493.3" cy="320.2" rx="2.2" ry="0.75" fill="#f78d17"/><path d="M493.3 318.8 C492.1 315.5 489.4 312.8 489.4 310.0 A3.9 4.1 0 1 1 497.2 310.0 C497.2 312.8 494.5 315.5 493.3 318.8Z" fill="#f78d17"/><ellipse cx="493.3" cy="309.9" rx="1.35" ry="1.6" fill="#fff"/><ellipse cx="493.7" cy="311.0" rx="2.2" ry="0.75" fill="#ea0f1b"/><path d="M493.7 309.6 C492.5 306.3 489.8 303.6 489.8 300.8 A3.9 4.1 0 1 1 497.6 300.8 C497.6 303.6 494.9 306.3 493.7 309.6Z" fill="#ea0f1b"/><ellipse cx="493.7" cy="300.7" rx="1.35" ry="1.6" fill="#fff"/><ellipse cx="486.7" cy="328.5" rx="2.2" ry="0.75" fill="#ea0f1b"/><path d="M486.7 327.1 C485.5 323.8 482.8 321.1 482.8 318.3 A3.9 4.1 0 1 1 490.6 318.3 C490.6 321.1 487.9 323.8 486.7 327.1Z" fill="#ea0f1b"/><ellipse cx="486.7" cy="318.2" rx="1.35" ry="1.6" fill="#fff"/><ellipse cx="482.8" cy="328.5" rx="2.2" ry="0.75" fill="#f6ef00"/><path d="M482.8 327.1 C481.6 323.8 478.9 321.1 478.9 318.3 A3.9 4.1 0 1 1 486.7 318.3 C486.7 321.1 484.0 323.8 482.8 327.1Z" fill="#f6ef00"/><ellipse cx="482.8" cy="318.2" rx="1.35" ry="1.6" fill="#fff"/><ellipse cx="488.2" cy="344.4" rx="2.2" ry="0.75" fill="#f6ef00"/><path d="M488.2 343.0 C487.0 339.7 484.3 337.0 484.3 334.2 A3.9 4.1 0 1 1 492.1 334.2 C492.1 337.0 489.4 339.7 488.2 343.0Z" fill="#f6ef00"/><ellipse cx="488.2" cy="334.1" rx="1.35" ry="1.6" fill="#fff"/><ellipse cx="491.7" cy="355.2" rx="2.2" ry="0.75" fill="#f78d17"/><path d="M491.7 353.8 C490.5 350.5 487.8 347.8 487.8 345.0 A3.9 4.1 0 1 1 495.6 345.0 C495.6 347.8 492.9 350.5 491.7 353.8Z" fill="#f78d17"/><ellipse cx="491.7" cy="344.9" rx="1.35" ry="1.6" fill="#fff"/><ellipse cx="498.2" cy="367.7" rx="2.2" ry="0.75" fill="#8c8c8c"/><path d="M498.2 366.3 C497.0 363.0 494.3 360.3 494.3 357.5 A3.9 4.1 0 1 1 502.1 357.5 C502.1 360.3 499.4 363.0 498.2 366.3Z" fill="#8c8c8c"/><ellipse cx="498.2" cy="357.4" rx="1.35" ry="1.6" fill="#fff"/><ellipse cx="542.0" cy="299.4" rx="2.2" ry="0.75" fill="#ea0f1b"/><path d="M542.0 298.0 C540.8 294.7 538.1 292.0 538.1 289.2 A3.9 4.1 0 1 1 545.9 289.2 C545.9 292.0 543.2 294.7 542.0 298.0Z" fill="#ea0f1b"/><ellipse cx="542.0" cy="289.1" rx="1.35" ry="1.6" fill="#fff"/><ellipse cx="540.3" cy="336.0" rx="2.2" ry="0.75" fill="#f78d17"/><path d="M540.3 334.6 C539.1 331.3 536.4 328.6 536.4 325.8 A3.9 4.1 0 1 1 544.2 325.8 C544.2 328.6 541.5 331.3 540.3 334.6Z" fill="#f78d17"/><ellipse cx="540.3" cy="325.7" rx="1.35" ry="1.6" fill="#fff"/><ellipse cx="527.5" cy="340.2" rx="2.2" ry="0.75" fill="#ea0f1b"/><path d="M527.5 338.8 C526.3 335.5 523.6 332.8 523.6 330.0 A3.9 4.1 0 1 1 531.4 330.0 C531.4 332.8 528.7 335.5 527.5 338.8Z" fill="#ea0f1b"/><ellipse cx="527.5" cy="329.9" rx="1.35" ry="1.6" fill="#fff"/><ellipse cx="436.3" cy="388.5" rx="2.2" ry="0.75" fill="#1ce31c"/><path d="M436.3 387.1 C435.1 383.8 432.4 381.1 432.4 378.3 A3.9 4.1 0 1 1 440.2 378.3 C440.2 381.1 437.5 383.8 436.3 387.1Z" fill="#1ce31c"/><ellipse cx="436.3" cy="378.2" rx="1.35" ry="1.6" fill="#fff"/><ellipse cx="467.8" cy="388.5" rx="2.2" ry="0.75" fill="#f6ef00"/><path d="M467.8 387.1 C466.6 383.8 463.9 381.1 463.9 378.3 A3.9 4.1 0 1 1 471.7 378.3 C471.7 381.1 469.0 383.8 467.8 387.1Z" fill="#f6ef00"/><ellipse cx="467.8" cy="378.2" rx="1.35" ry="1.6" fill="#fff"/><ellipse cx="482.5" cy="377.2" rx="2.2" ry="0.75" fill="#ea0f1b"/><path d="M482.5 375.8 C481.3 372.5 478.6 369.8 478.6 367.0 A3.9 4.1 0 1 1 486.4 367.0 C486.4 369.8 483.7 372.5 482.5 375.8Z" fill="#ea0f1b"/><ellipse cx="482.5" cy="366.9" rx="1.35" ry="1.6" fill="#fff"/><ellipse cx="489.2" cy="376.0" rx="2.2" ry="0.75" fill="#f6ef00"/><path d="M489.2 374.6 C488.0 371.3 485.3 368.6 485.3 365.8 A3.9 4.1 0 1 1 493.1 365.8 C493.1 368.6 490.4 371.3 489.2 374.6Z" fill="#f6ef00"/><ellipse cx="489.2" cy="365.7" rx="1.35" ry="1.6" fill="#fff"/><ellipse cx="463.3" cy="401.5" rx="2.2" ry="0.75" fill="#ea0f1b"/><path d="M463.3 400.1 C462.1 396.8 459.4 394.1 459.4 391.3 A3.9 4.1 0 1 1 467.2 391.3 C467.2 394.1 464.5 396.8 463.3 400.1Z" fill="#ea0f1b"/><ellipse cx="463.3" cy="391.2" rx="1.35" ry="1.6" fill="#fff"/><ellipse cx="447.0" cy="417.2" rx="2.2" ry="0.75" fill="#ea0f1b"/><path d="M447.0 415.8 C445.8 412.5 443.1 409.8 443.1 407.0 A3.9 4.1 0 1 1 450.9 407.0 C450.9 409.8 448.2 412.5 447.0 415.8Z" fill="#ea0f1b"/><ellipse cx="447.0" cy="406.9" rx="1.35" ry="1.6" fill="#fff"/><ellipse cx="479.7" cy="428.9" rx="2.2" ry="0.75" fill="#ea0f1b"/><path d="M479.7 427.5 C478.5 424.2 475.8 421.5 475.8 418.7 A3.9 4.1 0 1 1 483.6 418.7 C483.6 421.5 480.9 424.2 479.7 427.5Z" fill="#ea0f1b"/><ellipse cx="479.7" cy="418.6" rx="1.35" ry="1.6" fill="#fff"/><ellipse cx="496.2" cy="426.0" rx="2.2" ry="0.75" fill="#1ce31c"/><path d="M496.2 424.6 C495.0 421.3 492.3 418.6 492.3 415.8 A3.9 4.1 0 1 1 500.1 415.8 C500.1 418.6 497.4 421.3 496.2 424.6Z" fill="#1ce31c"/><ellipse cx="496.2" cy="415.7" rx="1.35" ry="1.6" fill="#fff"/><ellipse cx="459.7" cy="443.9" rx="2.2" ry="0.75" fill="#ea0f1b"/><path d="M459.7 442.5 C458.5 439.2 455.8 436.5 455.8 433.7 A3.9 4.1 0 1 1 463.6 433.7 C463.6 436.5 460.9 439.2 459.7 442.5Z" fill="#ea0f1b"/><ellipse cx="459.7" cy="433.6" rx="1.35" ry="1.6" fill="#fff"/><ellipse cx="450.0" cy="456.7" rx="2.2" ry="0.75" fill="#f6ef00"/><path d="M450.0 455.3 C448.8 452.0 446.1 449.3 446.1 446.5 A3.9 4.1 0 1 1 453.9 446.5 C453.9 449.3 451.2 452.0 450.0 455.3Z" fill="#f6ef00"/><ellipse cx="450.0" cy="446.4" rx="1.35" ry="1.6" fill="#fff"/></svg></body></html>
